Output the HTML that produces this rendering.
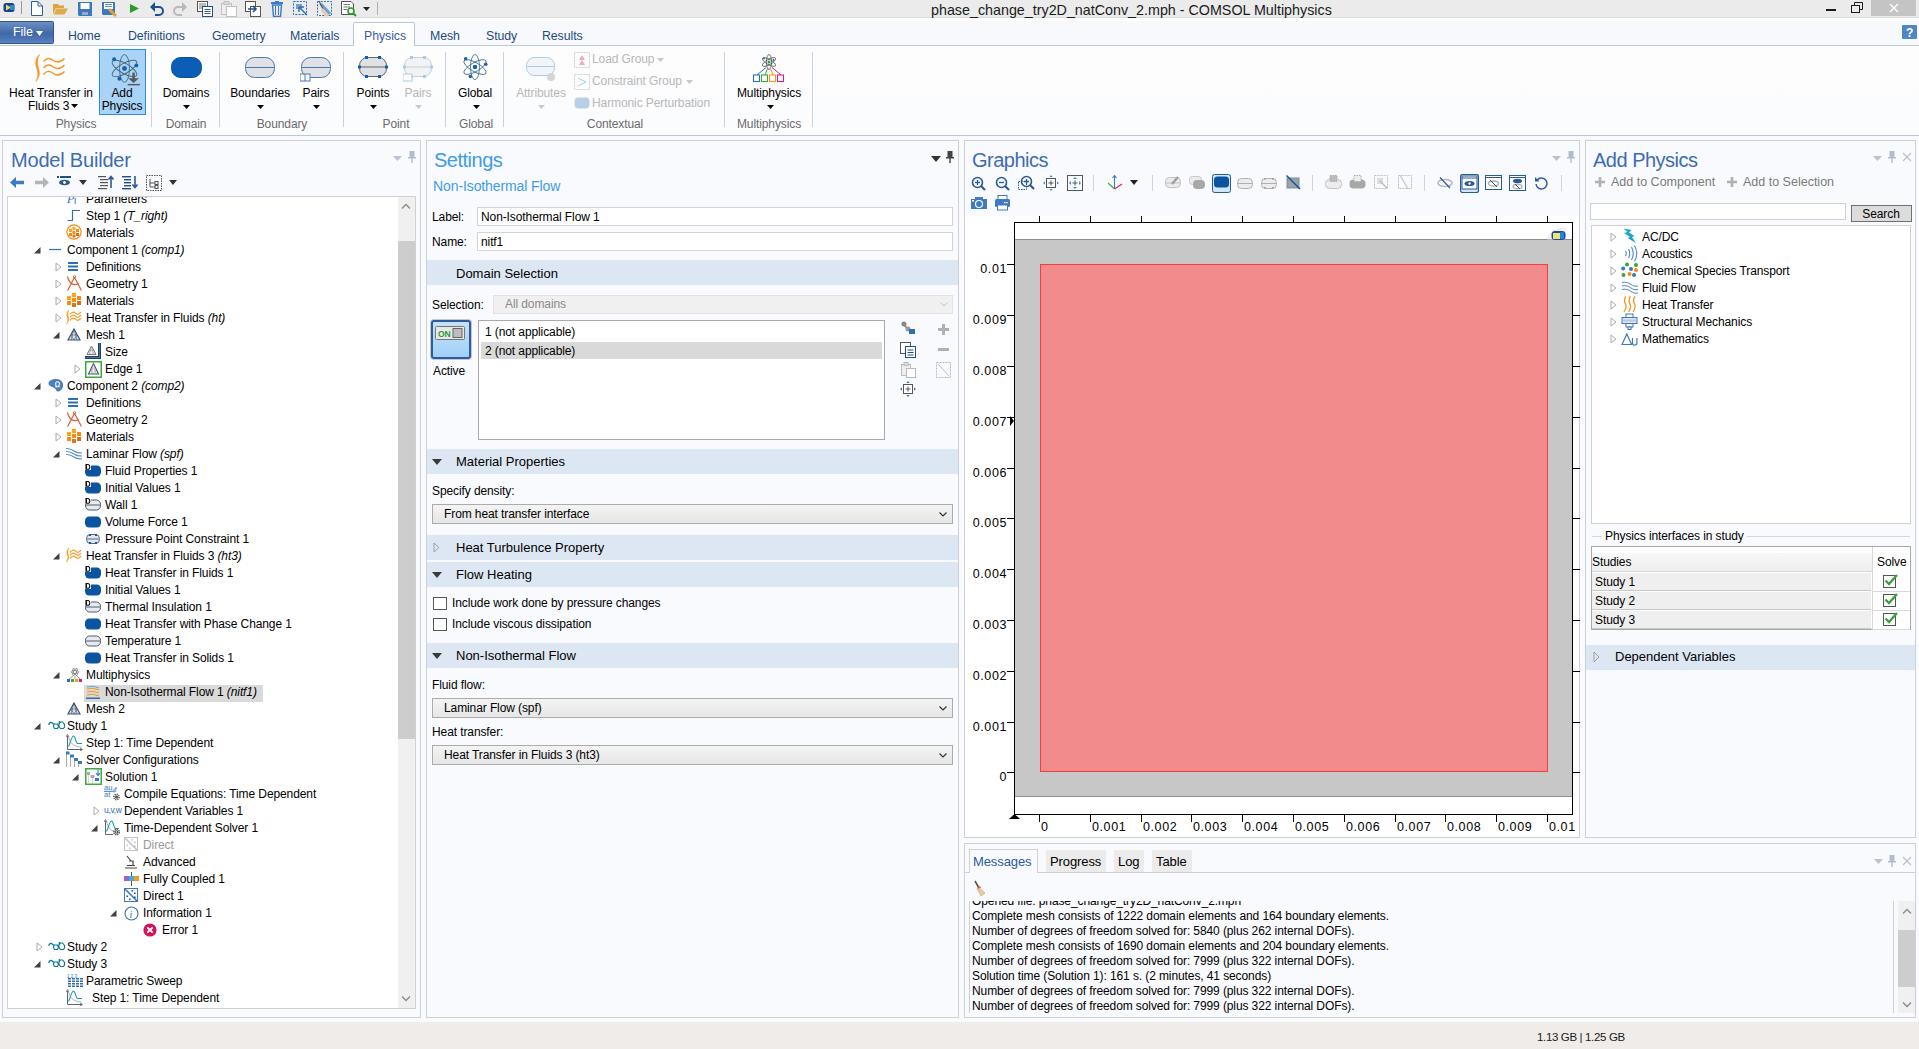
<!DOCTYPE html>
<html><head><meta charset="utf-8"><title>COMSOL Multiphysics</title>
<style>
html,body{margin:0;padding:0;}
body{width:1919px;height:1049px;position:relative;overflow:hidden;background:#f9fafd;font-family:"Liberation Sans",sans-serif;}
body div, body svg{position:absolute;box-sizing:border-box;}
.t{white-space:nowrap;letter-spacing:-0.1px;}
i{font-style:italic;}
</style></head><body>
<div style="left:0px;top:0px;width:1919px;height:18px;background:#ebebeb;"></div>
<div style="left:0px;top:17px;width:1919px;height:1px;background:#dcdcdc;"></div>
<div style="left:0px;top:18px;width:1919px;height:3px;background:#fdfdfe;"></div>
<div class="t" style="left:931px;top:3px;font-size:14.3px;line-height:14.3px;color:#1a1a1a;letter-spacing:0;">phase_change_try2D_natConv_2.mph - COMSOL Multiphysics</div>
<div style="left:1826px;top:9px;width:10px;height:2px;background:#1a1a1a;"></div>
<svg style="left:1851px;top:2px" width="12" height="11" viewBox="0 0 12 11"><rect x="0.5" y="3.5" width="8" height="7" fill="none" stroke="#1a1a1a"/><path d="M3.5 3.5 V0.5 H11.5 V7.5 H8.5" fill="none" stroke="#1a1a1a"/></svg>
<div style="left:1871px;top:0px;width:45px;height:16px;background:#c4c4c4;"></div>
<svg style="left:1889px;top:3px" width="10" height="10" viewBox="0 0 10 10"><path d="M1 1 L9 9 M9 1 L1 9" stroke="#fff" stroke-width="1.4"/></svg>
<div style="left:0px;top:21px;width:1919px;height:24px;background:#f8f9fd;"></div>
<div style="left:0px;top:45px;width:1919px;height:1px;background:#bccbdc;"></div>
<div style="left:0px;top:46px;width:1919px;height:89px;background:linear-gradient(#fdfdfe,#fbfcfd);"></div>
<div style="left:0px;top:135px;width:1919px;height:1px;background:#b9c9db;"></div>
<div style="left:0px;top:21px;width:54px;height:23px;background:linear-gradient(#6e8fc3,#3f68a8 55%,#5b80bb);border:1px solid #2d5896;border-left:none;border-radius:0 2px 2px 0;"></div>
<div class="t" style="left:13px;top:26px;font-size:12.5px;line-height:12.5px;color:#fff;">File</div>
<svg style="left:36px;top:31px" width="7" height="5" viewBox="0 0 7 5"><path d="M0 0 H7 L3.5 5 Z" fill="#fff"/></svg>
<div style="left:353px;top:22px;width:62px;height:24px;background:#fff;border:1px solid #b7c8dc;border-bottom:none;border-radius:2px 2px 0 0;"></div>
<div class="t" style="left:68px;top:30px;font-size:12.3px;line-height:12.3px;color:#1e4a80;letter-spacing:-0.05px;">Home</div>
<div class="t" style="left:128px;top:30px;font-size:12.3px;line-height:12.3px;color:#1e4a80;letter-spacing:-0.05px;">Definitions</div>
<div class="t" style="left:212px;top:30px;font-size:12.3px;line-height:12.3px;color:#1e4a80;letter-spacing:-0.05px;">Geometry</div>
<div class="t" style="left:290px;top:30px;font-size:12.3px;line-height:12.3px;color:#1e4a80;letter-spacing:-0.05px;">Materials</div>
<div class="t" style="left:364px;top:30px;font-size:12.3px;line-height:12.3px;color:#3a5aa8;letter-spacing:-0.05px;">Physics</div>
<div class="t" style="left:430px;top:30px;font-size:12.3px;line-height:12.3px;color:#1e4a80;letter-spacing:-0.05px;">Mesh</div>
<div class="t" style="left:486px;top:30px;font-size:12.3px;line-height:12.3px;color:#1e4a80;letter-spacing:-0.05px;">Study</div>
<div class="t" style="left:542px;top:30px;font-size:12.3px;line-height:12.3px;color:#1e4a80;letter-spacing:-0.05px;">Results</div>
<div style="left:1902px;top:25px;width:15px;height:14px;background:#4f86c6;border-radius:1px;"></div>
<div class="t" style="left:1906px;top:27px;font-size:12px;line-height:12px;color:#fff;font-weight:bold;">?</div>
<svg style="left:34px;top:54px" width="32" height="28" viewBox="0 0 32 28"><path d="M5.5 0.5 C1 5 1 10 3 15 C4.5 19 4 23 2 27.5 C5.5 23 6 19 4.6 15 C3.2 10 3 5 5.5 0.5 Z" fill="#f7931e" stroke="#f7931e" stroke-width="0.6"/><path d="M9.5 7.5 C12.5 3.5 15.5 3.5 19.5 6.5 C23.5 9.5 26.5 8.5 30.5 4.5" fill="none" stroke="#f7931e" stroke-width="1.3"/><path d="M9.5 14 C12.5 10 15.5 10 19.5 13 C23.5 16 26.5 15 30.5 11" fill="none" stroke="#f7931e" stroke-width="1.3"/><path d="M9.5 20.5 C12.5 16.5 15.5 16.5 19.5 19.5 C23.5 22.5 26.5 21.5 30.5 17.5" fill="none" stroke="#f7931e" stroke-width="1.3"/></svg>
<div class="t" style="left:-49.0px;top:87px;width:200px;text-align:center;font-size:12px;line-height:12px;color:#000;">Heat Transfer in</div>
<div class="t" style="left:28px;top:100px;font-size:12px;line-height:12px;color:#000;">Fluids 3</div>
<svg style="left:71px;top:104px" width="7" height="4" viewBox="0 0 7 4"><path d="M0 0 H7 L3.5 4 Z" fill="#000"/></svg>
<div style="left:99px;top:49px;width:47px;height:66px;background:#a9d3f7;border:1px solid #2e8be8;"></div>
<svg style="left:109px;top:53px" width="31" height="33" viewBox="0 0 30 32"><g transform="translate(15 15)" fill="none" stroke="#4a6a7a" stroke-width="0.9"><ellipse rx="13.5" ry="4.8" transform="rotate(90)"/><ellipse rx="13.5" ry="4.8" transform="rotate(30)"/><ellipse rx="13.5" ry="4.8" transform="rotate(150)"/></g><circle cx="15" cy="15" r="2.4" fill="#1560b0"/><circle cx="5" cy="6" r="1.9" fill="#1560b0"/><circle cx="26.5" cy="12" r="1.9" fill="#1560b0"/><circle cx="10" cy="25" r="1.9" fill="#1560b0"/><rect x="22.6" y="19" width="2.4" height="7" fill="#5a5a5a"/><path d="M18.5 24.5 H29 L23.8 29 Z" fill="#5a5a5a"/><rect x="18" y="30" width="12" height="1.4" fill="#5a5a5a"/></svg>
<div class="t" style="left:22.0px;top:87px;width:200px;text-align:center;font-size:12px;line-height:12px;color:#000;">Add</div>
<div class="t" style="left:22.0px;top:100px;width:200px;text-align:center;font-size:12px;line-height:12px;color:#000;">Physics</div>
<div class="t" style="left:-24.0px;top:118px;width:200px;text-align:center;font-size:12px;line-height:12px;color:#6b6b6b;">Physics</div>
<div style="left:151px;top:52px;width:1px;height:75px;background:#c5d3e2;"></div>
<svg style="left:171px;top:57px" width="31" height="21" viewBox="0 0 31 21"><rect x="0.5" y="0.5" width="30" height="20" rx="9" fill="#0b5eb5" stroke="#0a4f97"/></svg>
<div class="t" style="left:86.0px;top:87px;width:200px;text-align:center;font-size:12px;line-height:12px;color:#000;">Domains</div>
<svg style="left:183px;top:105px" width="7" height="4" viewBox="0 0 7 4"><path d="M0 0 H7 L3.5 4 Z" fill="#000"/></svg>
<div class="t" style="left:86.0px;top:118px;width:200px;text-align:center;font-size:12px;line-height:12px;color:#6b6b6b;">Domain</div>
<div style="left:219px;top:52px;width:1px;height:75px;background:#c5d3e2;"></div>
<svg style="left:245px;top:57px" width="30" height="21" viewBox="0 0 30 21"><rect x="0.5" y="0.5" width="29" height="20" rx="9" fill="#dfe1e4" stroke="#4a78b0"/><line x1="1" y1="10.5" x2="29" y2="10.5" stroke="#4a78b0"/></svg>
<div class="t" style="left:160.0px;top:87px;width:200px;text-align:center;font-size:12px;line-height:12px;color:#000;">Boundaries</div>
<svg style="left:257px;top:105px" width="7" height="4" viewBox="0 0 7 4"><path d="M0 0 H7 L3.5 4 Z" fill="#000"/></svg>
<svg style="left:300px;top:57px" width="32" height="25" viewBox="0 0 32 25"><rect x="1.5" y="0.5" width="29" height="20" rx="9" fill="#dfe1e4" stroke="#4a78b0"/><line x1="2" y1="10.5" x2="30" y2="10.5" stroke="#4a78b0"/><rect x="0" y="17" width="10" height="7" fill="#fff" stroke="#4a78b0"/><line x1="5" y1="17" x2="5" y2="24" stroke="#4a78b0"/></svg>
<div class="t" style="left:216.0px;top:87px;width:200px;text-align:center;font-size:12px;line-height:12px;color:#000;">Pairs</div>
<svg style="left:313px;top:105px" width="7" height="4" viewBox="0 0 7 4"><path d="M0 0 H7 L3.5 4 Z" fill="#000"/></svg>
<div class="t" style="left:182.0px;top:118px;width:200px;text-align:center;font-size:12px;line-height:12px;color:#6b6b6b;">Boundary</div>
<div style="left:343px;top:52px;width:1px;height:75px;background:#c5d3e2;"></div>
<svg style="left:358px;top:56px" width="30" height="22" viewBox="0 0 30 22"><rect x="1.5" y="1.5" width="27" height="19" rx="8" fill="#dfe1e4" stroke="#666"/><line x1="2" y1="11" x2="28" y2="11" stroke="#666"/><rect x="7" y="0" width="3" height="3" fill="#0b5eb5"/><rect x="20" y="0" width="3" height="3" fill="#0b5eb5"/><rect x="7" y="19" width="3" height="3" fill="#0b5eb5"/><rect x="20" y="19" width="3" height="3" fill="#0b5eb5"/><rect x="0" y="9.5" width="3" height="3" fill="#0b5eb5"/><rect x="27" y="9.5" width="3" height="3" fill="#0b5eb5"/></svg>
<div class="t" style="left:273.0px;top:87px;width:200px;text-align:center;font-size:12px;line-height:12px;color:#000;">Points</div>
<svg style="left:370px;top:105px" width="7" height="4" viewBox="0 0 7 4"><path d="M0 0 H7 L3.5 4 Z" fill="#000"/></svg>
<svg style="left:403px;top:56px" width="30" height="26" viewBox="0 0 30 26"><rect x="1.5" y="1.5" width="27" height="19" rx="8" fill="#f2f3f4" stroke="#ccc"/><line x1="2" y1="11" x2="28" y2="11" stroke="#ccc"/><rect x="7" y="0" width="3" height="3" fill="#a9cbe9"/><rect x="20" y="0" width="3" height="3" fill="#a9cbe9"/><rect x="7" y="19" width="3" height="3" fill="#a9cbe9"/><rect x="20" y="19" width="3" height="3" fill="#a9cbe9"/><rect x="0" y="9.5" width="3" height="3" fill="#a9cbe9"/><rect x="27" y="9.5" width="3" height="3" fill="#a9cbe9"/><rect x="0" y="18" width="9" height="7" fill="#fff" stroke="#a9cbe9"/></svg>
<div class="t" style="left:318.0px;top:87px;width:200px;text-align:center;font-size:12px;line-height:12px;color:#b8b8b8;">Pairs</div>
<svg style="left:415px;top:105px" width="7" height="4" viewBox="0 0 7 4"><path d="M0 0 H7 L3.5 4 Z" fill="#c8c8c8"/></svg>
<div class="t" style="left:296.0px;top:118px;width:200px;text-align:center;font-size:12px;line-height:12px;color:#6b6b6b;">Point</div>
<div style="left:445px;top:52px;width:1px;height:75px;background:#c5d3e2;"></div>
<svg style="left:461px;top:53px" width="28" height="30" viewBox="0 0 30 32"><g transform="translate(15 15)" fill="none" stroke="#3f6f86" stroke-width="0.9"><ellipse rx="13.5" ry="4.8" transform="rotate(90)"/><ellipse rx="13.5" ry="4.8" transform="rotate(30)"/><ellipse rx="13.5" ry="4.8" transform="rotate(150)"/></g><circle cx="15" cy="15" r="2.4" fill="#1a5fb4"/><circle cx="5" cy="6" r="1.9" fill="#1a5fb4"/><circle cx="26.5" cy="12" r="1.9" fill="#1a5fb4"/><circle cx="10" cy="25" r="1.9" fill="#1a5fb4"/></svg>
<div class="t" style="left:375.0px;top:87px;width:200px;text-align:center;font-size:12px;line-height:12px;color:#000;">Global</div>
<svg style="left:473px;top:105px" width="7" height="4" viewBox="0 0 7 4"><path d="M0 0 H7 L3.5 4 Z" fill="#000"/></svg>
<div class="t" style="left:376.0px;top:118px;width:200px;text-align:center;font-size:12px;line-height:12px;color:#6b6b6b;">Global</div>
<div style="left:503px;top:52px;width:1px;height:75px;background:#c5d3e2;"></div>
<svg style="left:526px;top:57px" width="30" height="26" viewBox="0 0 30 26"><rect x="0.5" y="0.5" width="28" height="18" rx="8" fill="#f3f4f6" stroke="#a9cbe9"/><line x1="1" y1="9.5" x2="28" y2="9.5" stroke="#a9cbe9"/><circle cx="25" cy="20" r="4" fill="#d4d4d4"/></svg>
<div class="t" style="left:441.0px;top:87px;width:200px;text-align:center;font-size:12px;line-height:12px;color:#b8b8b8;">Attributes</div>
<svg style="left:538px;top:105px" width="7" height="4" viewBox="0 0 7 4"><path d="M0 0 H7 L3.5 4 Z" fill="#c8c8c8"/></svg>
<svg style="left:574px;top:52px" width="16" height="16" viewBox="0 0 16 16"><rect x="0.5" y="0.5" width="15" height="15" fill="none" stroke="#cfcfcf" stroke-dasharray="2 1"/><path d="M8 3 L5 8 H11 Z M8 8 L5 13 H11 Z" fill="#f0a8c8"/></svg>
<div class="t" style="left:592px;top:53px;font-size:12px;line-height:12px;color:#b8b8b8;">Load Group</div>
<svg style="left:657px;top:58px" width="7" height="4" viewBox="0 0 7 4"><path d="M0 0 H7 L3.5 4 Z" fill="#c8c8c8"/></svg>
<svg style="left:574px;top:74px" width="16" height="16" viewBox="0 0 16 16"><rect x="0.5" y="0.5" width="15" height="15" fill="none" stroke="#cfcfcf" stroke-dasharray="2 1"/><path d="M4 4 L12 8 L4 12" fill="none" stroke="#a9cbe9"/></svg>
<div class="t" style="left:592px;top:75px;font-size:12px;line-height:12px;color:#b8b8b8;">Constraint Group</div>
<svg style="left:686px;top:80px" width="7" height="4" viewBox="0 0 7 4"><path d="M0 0 H7 L3.5 4 Z" fill="#c8c8c8"/></svg>
<svg style="left:574px;top:97px" width="16" height="12" viewBox="0 0 16 12"><rect x="0.5" y="0.5" width="15" height="11" rx="4" fill="#b7d0e6"/></svg>
<div class="t" style="left:592px;top:97px;font-size:12px;line-height:12px;color:#b8b8b8;">Harmonic Perturbation</div>
<div class="t" style="left:515.0px;top:118px;width:200px;text-align:center;font-size:12px;line-height:12px;color:#6b6b6b;">Contextual</div>
<div style="left:724px;top:52px;width:1px;height:75px;background:#c5d3e2;"></div>
<svg style="left:752px;top:54px" width="34" height="29" viewBox="0 0 34 29"><g transform="translate(17 8)" fill="none" stroke="#555" stroke-width="0.8"><ellipse rx="7.5" ry="2.6" transform="rotate(90)"/><ellipse rx="7.5" ry="2.6" transform="rotate(30)"/><ellipse rx="7.5" ry="2.6" transform="rotate(150)"/></g><circle cx="17" cy="8" r="1.5" fill="#2a9d3a"/><circle cx="12" cy="4.5" r="1" fill="#2a6fc9"/><circle cx="21.5" cy="6" r="1" fill="#2a6fc9"/><path d="M14 13.5 L5 21" stroke="#2a6fc9" fill="none"/><path d="M15.5 14.5 L13 21" stroke="#3aaa3a" fill="none"/><path d="M18.5 14.5 L21 21" stroke="#f39a1e" fill="none"/><path d="M20 13.5 L29 21" stroke="#d0208a" fill="none"/><rect x="1.5" y="21" width="6" height="6.5" fill="#fff" stroke="#2a6fc9" stroke-width="1.1"/><rect x="9.5" y="21" width="6" height="6.5" fill="#fff" stroke="#3aaa3a" stroke-width="1.1"/><rect x="17.5" y="21" width="6" height="6.5" fill="#fff" stroke="#f39a1e" stroke-width="1.1"/><rect x="25.5" y="21" width="6" height="6.5" fill="#fff" stroke="#d0208a" stroke-width="1.1"/></svg>
<div class="t" style="left:669.0px;top:87px;width:200px;text-align:center;font-size:12px;line-height:12px;color:#000;">Multiphysics</div>
<svg style="left:767px;top:105px" width="7" height="4" viewBox="0 0 7 4"><path d="M0 0 H7 L3.5 4 Z" fill="#000"/></svg>
<div class="t" style="left:669.0px;top:118px;width:200px;text-align:center;font-size:12px;line-height:12px;color:#6b6b6b;">Multiphysics</div>
<div style="left:812px;top:52px;width:1px;height:75px;background:#c5d3e2;"></div>
<div style="left:2px;top:140px;width:419px;height:878px;background:#f9fafd;border:1px solid #cdd0d5;"></div>
<div style="left:426px;top:140px;width:533px;height:878px;background:#f9fafd;border:1px solid #cdd0d5;"></div>
<div style="left:964px;top:140px;width:616px;height:698px;background:#f9fafd;border:1px solid #cdd0d5;"></div>
<div style="left:1585px;top:140px;width:331px;height:698px;background:#f9fafd;border:1px solid #cdd0d5;"></div>
<div style="left:964px;top:843px;width:952px;height:175px;background:#f9fafd;border:1px solid #cdd0d5;"></div>
<div style="left:0px;top:1022px;width:1919px;height:27px;background:#f0ecea;"></div>
<div class="t" style="left:1537px;top:1032px;font-size:11.5px;line-height:11.5px;color:#1a1a1a;letter-spacing:-0.35px;">1.13 GB | 1.25 GB</div>
<svg style="left:3px;top:2px" width="12" height="11" viewBox="0 0 12 11"><rect x="0.5" y="1" width="11" height="9" rx="2.5" fill="#1a3f9a"/><path d="M3 2.5 L8 5.5 L3 8.5 Z" fill="#f0e040"/><rect x="7" y="3" width="4" height="5" fill="#2aa0e0" opacity="0.8"/></svg>
<div style="left:21px;top:1px;width:1px;height:13px;background:#9a9a9a;"></div>
<svg style="left:31px;top:1px" width="12" height="15" viewBox="0 0 12 15"><path d="M0.5 0.5 H7 L11.5 5 V14.5 H0.5 Z" fill="#fff" stroke="#2f5f98"/><path d="M7 0.5 V5 H11.5" fill="none" stroke="#2f5f98"/></svg>
<svg style="left:53px;top:3px" width="16" height="12" viewBox="0 0 16 12"><path d="M0 1 H5 L6 2.5 H11 V5 H3 L0 11 Z" fill="#d9a441"/><path d="M3.5 5.5 H15 L11.5 11.5 H0.5 Z" fill="#e0aa48"/></svg>
<svg style="left:78px;top:2px" width="14" height="14" viewBox="0 0 14 14"><path d="M0 0 H14 V14 H1 L0 13 Z" fill="#3f77b8"/><rect x="2.5" y="1" width="9" height="6" fill="#fff"/><rect x="4" y="10" width="6" height="3" fill="#fff" opacity="0.4"/></svg>
<svg style="left:102px;top:2px" width="15" height="15" viewBox="0 0 15 15"><path d="M0 0 H13 V13 H1 L0 12 Z" fill="#3f77b8"/><rect x="2" y="1" width="9" height="6" fill="#fff"/><path d="M3 2.5 H10 M3 4.5 H10" stroke="#3f77b8" stroke-width="0.8"/><path d="M7 7 L14 14" stroke="#d9a441" stroke-width="3"/></svg>
<svg style="left:129px;top:3px" width="11" height="11" viewBox="0 0 11 11"><path d="M1 1 L10 5.5 L1 10 Z" fill="#2a9a2a"/></svg>
<svg style="left:150px;top:2px" width="14" height="14" viewBox="0 0 14 14"><path d="M4 5 H9 A4 4 0 0 1 9 13 H5" fill="none" stroke="#1f4f8f" stroke-width="2"/><path d="M0 5 L5 0 V10 Z" fill="#1f4f8f"/></svg>
<svg style="left:173px;top:2px" width="14" height="14" viewBox="0 0 14 14"><path d="M10 5 H5 A4 4 0 0 0 5 13 H9" fill="none" stroke="#b8b8b8" stroke-width="2"/><path d="M14 5 L9 0 V10 Z" fill="#b8b8b8"/></svg>
<svg style="left:197px;top:1px" width="16" height="16" viewBox="0 0 16 16"><rect x="0.5" y="0.5" width="10" height="10" fill="#fff" stroke="#555"/><path d="M2 3 H9 M2 5 H9 M2 7 H7" stroke="#555" stroke-width="0.8"/><rect x="5.5" y="5.5" width="10" height="10" fill="#fff" stroke="#1f4f8f"/><path d="M7.5 8.5 H13.5 M7.5 10.5 H13.5 M7.5 12.5 H13.5" stroke="#1f4f8f" stroke-width="0.9"/></svg>
<svg style="left:221px;top:1px" width="16" height="16" viewBox="0 0 16 16"><rect x="0.5" y="2.5" width="10" height="11" fill="#eee" stroke="#c0c0c0"/><rect x="3" y="0.5" width="5" height="3" fill="#ddd" stroke="#c0c0c0"/><rect x="5.5" y="5.5" width="10" height="10" fill="#fff" stroke="#c0c0c0"/></svg>
<svg style="left:245px;top:1px" width="16" height="16" viewBox="0 0 16 16"><rect x="0.5" y="0.5" width="10" height="10" fill="#fff" stroke="#555"/><rect x="5.5" y="5.5" width="10" height="10" fill="#fff" stroke="#555"/><path d="M3 8 H11 M8 5 L11 8 L8 11" stroke="#1f4f8f" stroke-width="1.6" fill="none"/></svg>
<svg style="left:271px;top:1px" width="12" height="16" viewBox="0 0 12 16"><rect x="0" y="1" width="12" height="2" fill="#3a7ac8"/><rect x="4" y="0" width="4" height="1.5" fill="#3a7ac8"/><path d="M1.5 4 H10.5 L9.5 15.5 H2.5 Z" fill="none" stroke="#3a7ac8" stroke-width="1.4"/><path d="M4.5 5 V14 M7.5 5 V14" stroke="#3a7ac8"/></svg>
<svg style="left:293px;top:1px" width="16" height="16" viewBox="0 0 16 16"><rect x="0.5" y="0.5" width="13" height="13" fill="none" stroke="#2f6db5" stroke-dasharray="2 1.2"/><rect x="3" y="3" width="6" height="5" fill="#6fa0d8"/><path d="M6 6 L14 14 M6 6 V11 M6 6 H11" stroke="#2f6db5" stroke-width="1.4"/></svg>
<svg style="left:317px;top:1px" width="16" height="16" viewBox="0 0 16 16"><rect x="0.5" y="0.5" width="14" height="14" fill="none" stroke="#2f6db5" stroke-dasharray="2 1.2"/><path d="M4 3 L13 13" stroke="#6fa0d8" stroke-width="3"/><path d="M2 0 L6 8" stroke="#555" stroke-width="1.2"/><path d="M5 7 L12 14 L9 16 L4 10 Z" fill="#e8cca8"/></svg>
<svg style="left:341px;top:1px" width="16" height="16" viewBox="0 0 16 16"><path d="M0.5 0.5 H10 L12.5 3 V13.5 H0.5 Z" fill="#fff" stroke="#555"/><path d="M2.5 3.5 H9 M2.5 6 H9 M2.5 8.5 H6" stroke="#555" stroke-width="0.8"/><circle cx="10" cy="10" r="3" fill="#fff" stroke="#2a9a2a" stroke-width="1.6"/><path d="M12 12 L15 15" stroke="#2a9a2a" stroke-width="2"/></svg>
<svg style="left:363px;top:7px" width="7" height="4" viewBox="0 0 7 4"><path d="M0 0 H7 L3.5 4 Z" fill="#222"/></svg>
<div style="left:377px;top:2px;width:1px;height:13px;background:#b0b0b0;"></div>
<div class="t" style="left:11px;top:150px;font-size:20px;line-height:20px;color:#3e6cb2;letter-spacing:-0.2px;">Model Builder</div>
<svg style="left:393px;top:156px" width="9" height="5" viewBox="0 0 9 5"><path d="M0 0 H9 L4.5 5 Z" fill="#b9c2d0"/></svg>
<svg style="left:408px;top:151px" width="8" height="12" viewBox="0 0 8 12"><rect x="1.5" y="0" width="5" height="6" fill="#b4bccb"/><rect x="0" y="6" width="8" height="1.5" fill="#b4bccb"/><rect x="3.3" y="7" width="1.4" height="5" fill="#b4bccb"/></svg>
<svg style="left:10px;top:177px" width="15" height="11" viewBox="0 0 15 11"><path d="M0 5.5 L6 0 V3.8 H14 V7.2 H6 V11 Z" fill="#3f7bbf"/></svg>
<svg style="left:34px;top:177px" width="15" height="11" viewBox="0 0 15 11"><path d="M15 5.5 L9 0 V3.8 H1 V7.2 H9 V11 Z" fill="#b5b5b5"/></svg>
<svg style="left:57px;top:176px" width="15" height="11" viewBox="0 0 15 11"><rect x="0" y="0" width="2" height="2" fill="#1f4f8f"/><rect x="3" y="0" width="11" height="2" fill="#1f4f8f"/><ellipse cx="7.5" cy="6.5" rx="5.5" ry="2.8" fill="#2b5a92"/><circle cx="7.5" cy="6.5" r="1.4" fill="#fff"/></svg>
<svg style="left:79px;top:180px" width="8" height="5" viewBox="0 0 8 5"><path d="M0 0 H8 L4 5 Z" fill="#333"/></svg>
<svg style="left:98px;top:175px" width="17" height="15" viewBox="0 0 17 15"><g fill="#555"><rect x="0" y="1" width="8" height="1.2"/><rect x="2" y="4" width="8" height="1.2"/><rect x="2" y="7" width="8" height="1.2"/><rect x="2" y="10" width="8" height="1.2"/><rect x="0" y="13" width="9" height="1.2"/></g><path d="M13 2 V13 M10.5 4.5 L13 1.5 L15.5 4.5" stroke="#2b5a92" stroke-width="1.6" fill="none"/></svg>
<svg style="left:122px;top:175px" width="17" height="15" viewBox="0 0 17 15"><g fill="#1f4f8f"><rect x="0" y="1" width="9" height="1.4"/><rect x="2" y="4" width="7" height="1.4"/><rect x="2" y="7" width="7" height="1.4"/><rect x="2" y="10" width="7" height="1.4"/><rect x="0" y="13" width="9" height="1.4"/></g><path d="M13 1 V12 M10.5 9.5 L13 12.5 L15.5 9.5" stroke="#2b5a92" stroke-width="1.6" fill="none"/></svg>
<svg style="left:146px;top:175px" width="17" height="17" viewBox="0 0 17 17"><rect x="0.5" y="0.5" width="15" height="15" fill="none" stroke="#555" stroke-dasharray="1.5 1"/><path d="M4 4 V12 H9 M4 8 H9" stroke="#555" fill="none"/><rect x="9" y="6.5" width="3" height="3" fill="none" stroke="#555"/><rect x="9" y="10.5" width="3" height="3" fill="none" stroke="#555"/></svg>
<svg style="left:169px;top:180px" width="8" height="5" viewBox="0 0 8 5"><path d="M0 0 H8 L4 5 Z" fill="#333"/></svg>
<div style="left:7px;top:196px;width:409px;height:813px;background:#fff;border:1px solid #d0d0d0;"></div>
<div style="left:398px;top:197px;width:17px;height:811px;background:#f0f0f0;"></div>
<div style="left:398px;top:241px;width:17px;height:498px;background:#cdcdcd;"></div>
<svg style="left:401px;top:203px" width="10" height="6" viewBox="0 0 10 6"><path d="M1 5.5 L5 1.5 L9 5.5" stroke="#8a8a8a" stroke-width="1.3" fill="none"/></svg>
<svg style="left:401px;top:996px" width="10" height="6" viewBox="0 0 10 6"><path d="M1 0.5 L5 4.5 L9 0.5" stroke="#8a8a8a" stroke-width="1.3" fill="none"/></svg>
<div style="left:8px;top:197px;width:390px;height:811px;overflow:hidden;">
<svg style="left:59px;top:-5px" width="14" height="14" viewBox="0 0 14 14"><text x="0" y="11" font-family="Liberation Serif" font-style="italic" font-size="12" fill="#2f6db5">P</text><text x="7" y="12" font-size="10" fill="#2f6db5" font-family="Liberation Sans">i</text></svg>
<div class="t" style="left:78px;top:-4px;font-size:12px;line-height:12px;color:#000;">Parameters</div>
<svg style="left:59px;top:12px" width="14" height="13" viewBox="0 0 14 13"><path d="M0.5 11.5 H5.5 V1.5 H13" fill="none" stroke="#2f6db5" stroke-width="1.2"/></svg>
<div class="t" style="left:78px;top:13px;font-size:12px;line-height:12px;color:#000;">Step 1 <i>(T_right)</i></div>
<svg style="left:58px;top:27px" width="16" height="16" viewBox="0 0 16 16"><circle cx="8" cy="8" r="7.1" fill="#fff" stroke="#f58a1a" stroke-width="1.2"/><rect x="6.5" y="3" width="3" height="3" fill="#ffa514"/><rect x="3" y="5" width="3" height="3" fill="#ffa31a"/><rect x="6.5" y="7" width="3" height="3" fill="#f98c10"/><rect x="10" y="5" width="3" height="3" fill="#f58a1a"/><rect x="3" y="9" width="3" height="3" fill="#fb8c12"/><rect x="6.5" y="10.5" width="3" height="3" fill="#d97a1a"/><rect x="10" y="9" width="3" height="3" fill="#d4731a"/></svg>
<div class="t" style="left:78px;top:30px;font-size:12px;line-height:12px;color:#000;">Materials</div>
<svg style="left:26px;top:50px" width="7" height="7" viewBox="0 0 7 7"><path d="M6.5 0 V6.5 H0 Z" fill="#404040"/></svg>
<svg style="left:40px;top:46px" width="14" height="13" viewBox="0 0 14 13"><line x1="1" y1="6.5" x2="13" y2="6.5" stroke="#2f6db5" stroke-width="1.2"/></svg>
<div class="t" style="left:59px;top:47px;font-size:12px;line-height:12px;color:#000;">Component 1 <i>(comp1)</i></div>
<svg style="left:47px;top:65px" width="7" height="10" viewBox="0 0 7 10"><path d="M1 1 L6 5 L1 9 Z" fill="#fff" stroke="#aaa" stroke-width="1"/></svg>
<svg style="left:59px;top:63px" width="12" height="12" viewBox="0 0 12 12"><rect x="1" y="2" width="10" height="2" fill="#2f6db5"/><rect x="1" y="5.5" width="10" height="2" fill="#2f6db5"/><rect x="1" y="9" width="10" height="2" fill="#2f6db5"/></svg>
<div class="t" style="left:78px;top:64px;font-size:12px;line-height:12px;color:#000;">Definitions</div>
<svg style="left:47px;top:82px" width="7" height="10" viewBox="0 0 7 10"><path d="M1 1 L6 5 L1 9 Z" fill="#fff" stroke="#aaa" stroke-width="1"/></svg>
<svg style="left:58px;top:78px" width="17" height="17" viewBox="0 0 17 17"><path d="M8.5 2.2 L1.6 15.5 M8.5 2.2 L15.4 15.5 M1.4 1.5 C2.5 6 5 9.2 8.5 9.6 C10 9.7 11.5 9.4 12.8 8.6" fill="none" stroke="#dd5a35" stroke-width="1.15"/><circle cx="8.5" cy="1.8" r="1.2" fill="none" stroke="#dd5a35" stroke-width="0.9"/></svg>
<div class="t" style="left:78px;top:81px;font-size:12px;line-height:12px;color:#000;">Geometry 1</div>
<svg style="left:47px;top:99px" width="7" height="10" viewBox="0 0 7 10"><path d="M1 1 L6 5 L1 9 Z" fill="#fff" stroke="#aaa" stroke-width="1"/></svg>
<svg style="left:59px;top:96px" width="14" height="15" viewBox="0 0 14 15"><rect x="5" y="0" width="4" height="4" fill="#ffa514"/><rect x="0" y="3" width="4" height="4" fill="#ffa31a"/><rect x="5" y="5" width="4" height="4" fill="#f98c10"/><rect x="10" y="3" width="4" height="4" fill="#f58a1a"/><rect x="0" y="8" width="4" height="4" fill="#fb8c12"/><rect x="5" y="10" width="4" height="4" fill="#d97a1a"/><rect x="10" y="8" width="4" height="4" fill="#d4731a"/></svg>
<div class="t" style="left:78px;top:98px;font-size:12px;line-height:12px;color:#000;">Materials</div>
<svg style="left:47px;top:116px" width="7" height="10" viewBox="0 0 7 10"><path d="M1 1 L6 5 L1 9 Z" fill="#fff" stroke="#aaa" stroke-width="1"/></svg>
<svg style="left:58px;top:113px" width="17" height="15" viewBox="0 0 17 15"><path d="M2.6 0 C0.6 3 0.4 5 1.4 7 C2.2 9 2 11 0.6 14 C3 11 3.2 9 2.4 7 C1.6 5 1.8 3 2.6 0 Z" fill="#f39a1e" stroke="#f39a1e" stroke-width="0.5"/><path d="M4 4.4 C6 1.7000000000000002 8 1.7000000000000002 9.5 3.2 C11 4.800000000000001 13 4.800000000000001 15 2.2" fill="none" stroke="#f39a1e" stroke-width="1.2"/><path d="M4 7.4 C6 4.7 8 4.7 9.5 6.2 C11 7.800000000000001 13 7.800000000000001 15 5.2" fill="none" stroke="#f39a1e" stroke-width="1.2"/><path d="M4 10.399999999999999 C6 7.699999999999999 8 7.699999999999999 9.5 9.2 C11 10.799999999999999 13 10.799999999999999 15 8.2" fill="none" stroke="#f39a1e" stroke-width="1.2"/></svg>
<div class="t" style="left:78px;top:115px;font-size:12px;line-height:12px;color:#000;">Heat Transfer in Fluids <i>(ht)</i></div>
<svg style="left:45px;top:135px" width="7" height="7" viewBox="0 0 7 7"><path d="M6.5 0 V6.5 H0 Z" fill="#404040"/></svg>
<svg style="left:59px;top:131px" width="14" height="13" viewBox="0 0 14 13"><path d="M7 1 L13 12 L1 12 Z" fill="#dfe3ea" stroke="#3d5470" stroke-width="1.2"/><path d="M4 7 L10 7 M7 1 L4 12 M7 1 L10 12 M4 7 L7 12 L10 7" fill="none" stroke="#3d5470" stroke-width="0.6"/></svg>
<div class="t" style="left:78px;top:132px;font-size:12px;line-height:12px;color:#000;">Mesh 1</div>
<svg style="left:77px;top:146px" width="17" height="17" viewBox="0 0 17 17"><path d="M6.5 3 L11 11.5 H2 Z" fill="#e8e8e8" stroke="#777" stroke-width="1"/><path d="M4.3 7.5 H8.7 M6.5 3 L4.3 11.5 M6.5 3 L8.7 11.5" stroke="#999" stroke-width="0.6"/><rect x="0" y="13" width="16" height="3" fill="#1f3f66"/><rect x="13" y="0" width="3" height="16" fill="#1f3f66"/><path d="M0.5 14.5 H15 M14.5 0.5 V15" stroke="#6fa3e0" stroke-width="1" stroke-dasharray="1 1"/></svg>
<div class="t" style="left:97px;top:149px;font-size:12px;line-height:12px;color:#000;">Size</div>
<svg style="left:66px;top:167px" width="7" height="10" viewBox="0 0 7 10"><path d="M1 1 L6 5 L1 9 Z" fill="#fff" stroke="#aaa" stroke-width="1"/></svg>
<svg style="left:77px;top:164px" width="17" height="17" viewBox="0 0 17 17"><rect x="0.75" y="0.75" width="15.5" height="15.5" fill="#fff" stroke="#3aaa3a" stroke-width="1.5"/><path d="M8.5 2.5 L13.5 13 H3.5 Z" fill="#f2f2f2" stroke="#3d5470" stroke-width="1.1"/><path d="M6 8 H11 M8.5 2.5 L6 13 M8.5 2.5 L11 13 M6 8 L8.5 13 L11 8" stroke="#999" stroke-width="0.5" fill="none"/></svg>
<div class="t" style="left:97px;top:166px;font-size:12px;line-height:12px;color:#000;">Edge 1</div>
<svg style="left:26px;top:186px" width="7" height="7" viewBox="0 0 7 7"><path d="M6.5 0 V6.5 H0 Z" fill="#404040"/></svg>
<svg style="left:40px;top:181px" width="17" height="15" viewBox="0 0 17 15"><path d="M0.6 4.5 C1.5 1.5 7 0.3 10.5 1.2 C14 2.2 15.6 5.5 15 8.5 C14.3 11.5 12 13.8 9.5 13.5 C8 13.3 8 11 6.5 10 C3.5 8.8 0 7.5 0.6 4.5 Z" fill="#4a80bb"/><path d="M7.3 8.8 H9 C7.8 8 7.6 6.8 7.6 5.8 A1.9 2 0 0 1 11.4 5.8 C11.4 6.8 11.2 8 10 8.8 H11.7" fill="none" stroke="#fff" stroke-width="1.1"/></svg>
<div class="t" style="left:59px;top:183px;font-size:12px;line-height:12px;color:#000;">Component 2 <i>(comp2)</i></div>
<svg style="left:47px;top:201px" width="7" height="10" viewBox="0 0 7 10"><path d="M1 1 L6 5 L1 9 Z" fill="#fff" stroke="#aaa" stroke-width="1"/></svg>
<svg style="left:59px;top:199px" width="12" height="12" viewBox="0 0 12 12"><rect x="1" y="2" width="10" height="2" fill="#2f6db5"/><rect x="1" y="5.5" width="10" height="2" fill="#2f6db5"/><rect x="1" y="9" width="10" height="2" fill="#2f6db5"/></svg>
<div class="t" style="left:78px;top:200px;font-size:12px;line-height:12px;color:#000;">Definitions</div>
<svg style="left:47px;top:218px" width="7" height="10" viewBox="0 0 7 10"><path d="M1 1 L6 5 L1 9 Z" fill="#fff" stroke="#aaa" stroke-width="1"/></svg>
<svg style="left:58px;top:214px" width="17" height="17" viewBox="0 0 17 17"><path d="M8.5 2.2 L1.6 15.5 M8.5 2.2 L15.4 15.5 M1.4 1.5 C2.5 6 5 9.2 8.5 9.6 C10 9.7 11.5 9.4 12.8 8.6" fill="none" stroke="#dd5a35" stroke-width="1.15"/><circle cx="8.5" cy="1.8" r="1.2" fill="none" stroke="#dd5a35" stroke-width="0.9"/></svg>
<div class="t" style="left:78px;top:217px;font-size:12px;line-height:12px;color:#000;">Geometry 2</div>
<svg style="left:47px;top:235px" width="7" height="10" viewBox="0 0 7 10"><path d="M1 1 L6 5 L1 9 Z" fill="#fff" stroke="#aaa" stroke-width="1"/></svg>
<svg style="left:59px;top:232px" width="14" height="15" viewBox="0 0 14 15"><rect x="5" y="0" width="4" height="4" fill="#ffa514"/><rect x="0" y="3" width="4" height="4" fill="#ffa31a"/><rect x="5" y="5" width="4" height="4" fill="#f98c10"/><rect x="10" y="3" width="4" height="4" fill="#f58a1a"/><rect x="0" y="8" width="4" height="4" fill="#fb8c12"/><rect x="5" y="10" width="4" height="4" fill="#d97a1a"/><rect x="10" y="8" width="4" height="4" fill="#d4731a"/></svg>
<div class="t" style="left:78px;top:234px;font-size:12px;line-height:12px;color:#000;">Materials</div>
<svg style="left:45px;top:254px" width="7" height="7" viewBox="0 0 7 7"><path d="M6.5 0 V6.5 H0 Z" fill="#404040"/></svg>
<svg style="left:58px;top:250px" width="17" height="14" viewBox="0 0 17 14"><path d="M0 1.5 C4 1.0 6 2.5 9 4.5 C11 6.0 13 6.0 16 6.0" fill="none" stroke="#5b8fcc" stroke-width="1.1"/><path d="M0 4.5 C4 4.0 6 5.5 9 7.5 C11 9.0 13 9.0 16 9.0" fill="none" stroke="#5b8fcc" stroke-width="1.1"/><path d="M0 7.5 C4 7.0 6 8.5 9 10.5 C11 12.0 13 12.0 16 12.0" fill="none" stroke="#5b8fcc" stroke-width="1.1"/></svg>
<div class="t" style="left:78px;top:251px;font-size:12px;line-height:12px;color:#000;">Laminar Flow <i>(spf)</i></div>
<svg style="left:77px;top:267px" width="17" height="13" viewBox="0 0 17 13"><rect x="0" y="1.5" width="16" height="11" rx="4.2" fill="#0b55a0"/><rect x="-1" y="-1" width="7" height="7" fill="#fff"/><path d="M1 0.5 h1.8 a2 2.4 0 0 1 0 4.8 h-1.8 z M1.5 0.5 v4.8" fill="none" stroke="#111" stroke-width="1.1"/></svg>
<div class="t" style="left:97px;top:268px;font-size:12px;line-height:12px;color:#000;">Fluid Properties 1</div>
<svg style="left:77px;top:284px" width="17" height="13" viewBox="0 0 17 13"><rect x="0" y="1.5" width="16" height="11" rx="4.2" fill="#0b55a0"/><rect x="-1" y="-1" width="7" height="7" fill="#fff"/><path d="M1 0.5 h1.8 a2 2.4 0 0 1 0 4.8 h-1.8 z M1.5 0.5 v4.8" fill="none" stroke="#111" stroke-width="1.1"/></svg>
<div class="t" style="left:97px;top:285px;font-size:12px;line-height:12px;color:#000;">Initial Values 1</div>
<svg style="left:77px;top:301px" width="17" height="13" viewBox="0 0 17 13"><rect x="0.5" y="2" width="15" height="10" rx="4.2" fill="#e8eaed" stroke="#4d5d72"/><line x1="1" y1="7" x2="15" y2="7" stroke="#4d5d72"/><rect x="-1" y="-1" width="7" height="7" fill="#fff"/><path d="M1 0.5 h1.8 a2 2.4 0 0 1 0 4.8 h-1.8 z M1.5 0.5 v4.8" fill="none" stroke="#111" stroke-width="1.1"/></svg>
<div class="t" style="left:97px;top:302px;font-size:12px;line-height:12px;color:#000;">Wall 1</div>
<svg style="left:77px;top:318px" width="17" height="13" viewBox="0 0 17 13"><rect x="0" y="1.5" width="16" height="11" rx="4.2" fill="#0b55a0"/></svg>
<div class="t" style="left:97px;top:319px;font-size:12px;line-height:12px;color:#000;">Volume Force 1</div>
<svg style="left:78px;top:335px" width="14" height="13" viewBox="0 0 14 13"><rect x="0.5" y="2.5" width="13" height="9" rx="4" fill="#e4e6ea" stroke="#5a6a80"/><line x1="1" y1="7" x2="13" y2="7" stroke="#5a6a80"/><g fill="#0b5cad"><rect x="3" y="2" width="2" height="2"/><rect x="9" y="2" width="2" height="2"/><rect x="3" y="10" width="2" height="2"/><rect x="9" y="10" width="2" height="2"/></g></svg>
<div class="t" style="left:97px;top:336px;font-size:12px;line-height:12px;color:#000;">Pressure Point Constraint 1</div>
<svg style="left:45px;top:356px" width="7" height="7" viewBox="0 0 7 7"><path d="M6.5 0 V6.5 H0 Z" fill="#404040"/></svg>
<svg style="left:58px;top:351px" width="17" height="15" viewBox="0 0 17 15"><path d="M2.6 0 C0.6 3 0.4 5 1.4 7 C2.2 9 2 11 0.6 14 C3 11 3.2 9 2.4 7 C1.6 5 1.8 3 2.6 0 Z" fill="#f39a1e" stroke="#f39a1e" stroke-width="0.5"/><path d="M4 4.4 C6 1.7000000000000002 8 1.7000000000000002 9.5 3.2 C11 4.800000000000001 13 4.800000000000001 15 2.2" fill="none" stroke="#f39a1e" stroke-width="1.2"/><path d="M4 7.4 C6 4.7 8 4.7 9.5 6.2 C11 7.800000000000001 13 7.800000000000001 15 5.2" fill="none" stroke="#f39a1e" stroke-width="1.2"/><path d="M4 10.399999999999999 C6 7.699999999999999 8 7.699999999999999 9.5 9.2 C11 10.799999999999999 13 10.799999999999999 15 8.2" fill="none" stroke="#f39a1e" stroke-width="1.2"/></svg>
<div class="t" style="left:78px;top:353px;font-size:12px;line-height:12px;color:#000;">Heat Transfer in Fluids 3 <i>(ht3)</i></div>
<svg style="left:77px;top:369px" width="17" height="13" viewBox="0 0 17 13"><rect x="0" y="1.5" width="16" height="11" rx="4.2" fill="#0b55a0"/><rect x="-1" y="-1" width="7" height="7" fill="#fff"/><path d="M1 0.5 h1.8 a2 2.4 0 0 1 0 4.8 h-1.8 z M1.5 0.5 v4.8" fill="none" stroke="#111" stroke-width="1.1"/></svg>
<div class="t" style="left:97px;top:370px;font-size:12px;line-height:12px;color:#000;">Heat Transfer in Fluids 1</div>
<svg style="left:77px;top:386px" width="17" height="13" viewBox="0 0 17 13"><rect x="0" y="1.5" width="16" height="11" rx="4.2" fill="#0b55a0"/><rect x="-1" y="-1" width="7" height="7" fill="#fff"/><path d="M1 0.5 h1.8 a2 2.4 0 0 1 0 4.8 h-1.8 z M1.5 0.5 v4.8" fill="none" stroke="#111" stroke-width="1.1"/></svg>
<div class="t" style="left:97px;top:387px;font-size:12px;line-height:12px;color:#000;">Initial Values 1</div>
<svg style="left:77px;top:403px" width="17" height="13" viewBox="0 0 17 13"><rect x="0.5" y="2" width="15" height="10" rx="4.2" fill="#e8eaed" stroke="#4d5d72"/><line x1="1" y1="7" x2="15" y2="7" stroke="#4d5d72"/><rect x="-1" y="-1" width="7" height="7" fill="#fff"/><path d="M1 0.5 h1.8 a2 2.4 0 0 1 0 4.8 h-1.8 z M1.5 0.5 v4.8" fill="none" stroke="#111" stroke-width="1.1"/></svg>
<div class="t" style="left:97px;top:404px;font-size:12px;line-height:12px;color:#000;">Thermal Insulation 1</div>
<svg style="left:77px;top:420px" width="17" height="13" viewBox="0 0 17 13"><rect x="0" y="1.5" width="16" height="11" rx="4.2" fill="#0b55a0"/></svg>
<div class="t" style="left:97px;top:421px;font-size:12px;line-height:12px;color:#000;">Heat Transfer with Phase Change 1</div>
<svg style="left:77px;top:437px" width="17" height="13" viewBox="0 0 17 13"><rect x="0.5" y="2" width="15" height="10" rx="4.2" fill="#e8eaed" stroke="#4d5d72"/><line x1="1" y1="7" x2="15" y2="7" stroke="#4d5d72"/></svg>
<div class="t" style="left:97px;top:438px;font-size:12px;line-height:12px;color:#000;">Temperature 1</div>
<svg style="left:77px;top:454px" width="17" height="13" viewBox="0 0 17 13"><rect x="0" y="1.5" width="16" height="11" rx="4.2" fill="#0b55a0"/></svg>
<div class="t" style="left:97px;top:455px;font-size:12px;line-height:12px;color:#000;">Heat Transfer in Solids 1</div>
<svg style="left:45px;top:475px" width="7" height="7" viewBox="0 0 7 7"><path d="M6.5 0 V6.5 H0 Z" fill="#404040"/></svg>
<svg style="left:59px;top:471px" width="15" height="15" viewBox="0 0 15 15"><g transform="translate(8 4)" fill="none" stroke="#666" stroke-width="0.6"><ellipse rx="4" ry="1.5"/><ellipse rx="4" ry="1.5" transform="rotate(60)"/><ellipse rx="4" ry="1.5" transform="rotate(120)"/></g><path d="M6 8 L2 11 M8 8 V11 M10 8 L13 11" stroke="#888" stroke-width="0.8"/><rect x="0" y="11" width="3" height="3" fill="#2a6fc9"/><rect x="4" y="11" width="3" height="3" fill="#3aaa3a"/><rect x="8" y="11" width="3" height="3" fill="#f39a1e"/><rect x="12" y="11" width="3" height="3" fill="#d0208a"/></svg>
<div class="t" style="left:78px;top:472px;font-size:12px;line-height:12px;color:#000;">Multiphysics</div>
<div style="left:76px;top:488px;width:179px;height:17px;background:#d9d9d9;"></div>
<svg style="left:78px;top:488px" width="14" height="14" viewBox="0 0 14 14"><path d="M1 4 Q7 2 13 5 M1 7 Q7 5 13 8 M1 10 Q7 8 13 11" fill="none" stroke="#f39a1e" stroke-width="1"/><path d="M1 2 Q7 0 13 3" fill="none" stroke="#6aa0d8" stroke-width="1"/><rect x="0" y="12.5" width="14" height="1.5" fill="#2f6db5"/></svg>
<div class="t" style="left:97px;top:489px;font-size:12px;line-height:12px;color:#000;">Non-Isothermal Flow 1 <i>(nitf1)</i></div>
<svg style="left:59px;top:505px" width="14" height="13" viewBox="0 0 14 13"><path d="M7 1 L13 12 L1 12 Z" fill="#dfe3ea" stroke="#3d5470" stroke-width="1.2"/><path d="M4 7 L10 7 M7 1 L4 12 M7 1 L10 12 M4 7 L7 12 L10 7" fill="none" stroke="#3d5470" stroke-width="0.6"/></svg>
<div class="t" style="left:78px;top:506px;font-size:12px;line-height:12px;color:#000;">Mesh 2</div>
<svg style="left:26px;top:526px" width="7" height="7" viewBox="0 0 7 7"><path d="M6.5 0 V6.5 H0 Z" fill="#404040"/></svg>
<svg style="left:40px;top:522px" width="18" height="11" viewBox="0 0 18 11"><path d="M0.8 6 C1.2 3.5 2.8 2.8 4 3.8 L5.8 5.4" fill="none" stroke="#117a96" stroke-width="1.3"/><path d="M6 5 H9.5 L10.5 7.5 L9.5 9.5 H6.5 L5.5 7.5 Z" fill="none" stroke="#117a96" stroke-width="1.2"/><path d="M11 5 L12.5 3 H14.5 L16.5 5.5 V8 L15.5 9.5 H12.5 L11 7.5 Z M10.5 7.5 L11.5 2" fill="none" stroke="#117a96" stroke-width="1.2"/></svg>
<div class="t" style="left:59px;top:523px;font-size:12px;line-height:12px;color:#000;">Study 1</div>
<svg style="left:58px;top:537px" width="18" height="17" viewBox="0 0 18 17"><path d="M1.5 2 V15.5 H16" fill="none" stroke="#666" stroke-width="1"/><path d="M0 3 L1.5 0.5 L3 3 M14 14 L16.5 15.5 L14 17" fill="none" stroke="#666" stroke-width="0.9"/><path d="M2.5 2.5 C4 9 7 12.5 15.5 13" fill="none" stroke="#a8a8a8" stroke-width="0.9"/><path d="M2.5 12.5 C4.5 9 5.5 2 7.5 2 C9.5 2 9.5 9 11.5 9.5 H16" fill="none" stroke="#1a9ab8" stroke-width="1.1"/></svg>
<div class="t" style="left:78px;top:540px;font-size:12px;line-height:12px;color:#000;">Step 1: Time Dependent</div>
<svg style="left:45px;top:560px" width="7" height="7" viewBox="0 0 7 7"><path d="M6.5 0 V6.5 H0 Z" fill="#404040"/></svg>
<svg style="left:58px;top:554px" width="17" height="17" viewBox="0 0 17 17"><path d="M0.5 1 V16 M4.5 4 V16 M8.5 7 V16 M12.5 10 V16" stroke="#a0a0a0" stroke-width="0.9"/><g fill="#3a78c0"><rect x="0" y="0.5" width="3.5" height="3"/><rect x="4" y="3.5" width="4" height="3"/><rect x="8" y="7" width="4" height="3"/><rect x="12" y="10" width="4" height="3"/></g></svg>
<div class="t" style="left:78px;top:557px;font-size:12px;line-height:12px;color:#000;">Solver Configurations</div>
<svg style="left:64px;top:577px" width="7" height="7" viewBox="0 0 7 7"><path d="M6.5 0 V6.5 H0 Z" fill="#404040"/></svg>
<svg style="left:77px;top:571px" width="17" height="17" viewBox="0 0 17 17"><rect x="0.75" y="0.75" width="15.5" height="15.5" fill="#fff" stroke="#3aaa3a" stroke-width="1.5"/><g fill="#a8a8a8"><rect x="2" y="4" width="3" height="3"/><rect x="5.5" y="7" width="4" height="3"/></g><path d="M3.5 7 V15 M7.5 10 V15" stroke="#c8c8c8" stroke-width="0.8"/><rect x="10" y="10" width="4" height="3" fill="#3a78c0"/><path d="M13 1.5 V7 M11 5 L13 7.5 L15 5" fill="none" stroke="#3a78c0" stroke-width="1.1"/></svg>
<div class="t" style="left:97px;top:574px;font-size:12px;line-height:12px;color:#000;">Solution 1</div>
<svg style="left:96px;top:587px" width="18" height="18" viewBox="0 0 18 18"><text x="0" y="6" font-size="7.5" fill="#3a78c0" font-family="Liberation Sans">au</text><rect x="0" y="6.8" width="9" height="1" fill="#3a78c0"/><text x="0" y="13" font-size="7.5" fill="#3a78c0" font-family="Liberation Sans">at</text><text x="10.5" y="8" font-size="8" fill="#3a78c0" font-family="Liberation Sans">f</text><rect x="9" y="5.5" width="2" height="0.9" fill="#3a78c0"/><rect x="9" y="7.3" width="2" height="0.9" fill="#3a78c0"/><circle cx="12.5" cy="13" r="2.6" fill="none" stroke="#555" stroke-width="1.6" stroke-dasharray="1.2 0.8"/><circle cx="12.5" cy="13" r="1.6" fill="#555"/></svg>
<div class="t" style="left:116px;top:591px;font-size:12px;line-height:12px;color:#000;">Compile Equations: Time Dependent</div>
<svg style="left:85px;top:609px" width="7" height="10" viewBox="0 0 7 10"><path d="M1 1 L6 5 L1 9 Z" fill="#fff" stroke="#aaa" stroke-width="1"/></svg>
<svg style="left:96px;top:607px" width="19" height="12" viewBox="0 0 19 12"><text x="0" y="9" font-size="8.5" fill="#2f6db5" font-family="Liberation Sans" letter-spacing="-0.3">u,v,w</text></svg>
<div class="t" style="left:116px;top:608px;font-size:12px;line-height:12px;color:#000;">Dependent Variables 1</div>
<svg style="left:83px;top:628px" width="7" height="7" viewBox="0 0 7 7"><path d="M6.5 0 V6.5 H0 Z" fill="#404040"/></svg>
<svg style="left:96px;top:622px" width="18" height="17" viewBox="0 0 18 17"><path d="M1.5 2 V15.5 H9" fill="none" stroke="#666" stroke-width="1"/><path d="M0 3 L1.5 0.5 L3 3" fill="none" stroke="#666" stroke-width="0.9"/><path d="M2.5 2.5 C4 8 6 11 9 12" fill="none" stroke="#a8a8a8" stroke-width="0.9"/><path d="M2.5 12.5 C4.5 9 5.5 2 7.5 2 C9.5 2 9.5 9 11.5 9.5 H15" fill="none" stroke="#1a9ab8" stroke-width="1.1"/><circle cx="12.5" cy="13" r="2.7" fill="none" stroke="#555" stroke-width="1.7" stroke-dasharray="1.3 0.8"/><circle cx="12.5" cy="13" r="1.7" fill="#555"/><circle cx="12.5" cy="13" r="0.7" fill="#fff"/></svg>
<div class="t" style="left:116px;top:625px;font-size:12px;line-height:12px;color:#000;">Time-Dependent Solver 1</div>
<svg style="left:116px;top:640px" width="14" height="14" viewBox="0 0 14 14"><rect x="0.5" y="0.5" width="13" height="13" fill="#fff" stroke="#c4c4c4"/><path d="M1 1 L13 13" stroke="#c4c4c4" stroke-width="1.6"/><g fill="#c4c4c4"><rect x="7.5" y="2" width="1.6" height="1.6"/><rect x="10" y="4.5" width="1.6" height="1.6"/><rect x="2.5" y="7.5" width="1.6" height="1.6"/><rect x="5" y="10.5" width="1.6" height="1.6"/><rect x="10" y="8.5" width="1.6" height="1.6"/></g></svg>
<div class="t" style="left:135px;top:642px;font-size:12px;line-height:12px;color:#9a9a9a;">Direct</div>
<svg style="left:116px;top:658px" width="14" height="14" viewBox="0 0 14 14"><path d="M3 1 L7 6 M5 6 H9 V10 M1 13 H13 M3 10.5 H11" stroke="#444" stroke-width="1.2" fill="none"/></svg>
<div class="t" style="left:135px;top:659px;font-size:12px;line-height:12px;color:#000;">Advanced</div>
<svg style="left:116px;top:675px" width="16" height="14" viewBox="0 0 16 14"><rect x="0" y="4" width="5" height="5" fill="#a060c8"/><rect x="5" y="4" width="5" height="5" fill="#42a8e0"/><rect x="10" y="4" width="5" height="5" fill="#f39a1e"/><path d="M7.5 0 V4 M7.5 9 V14" stroke="#555" stroke-width="1"/></svg>
<div class="t" style="left:135px;top:676px;font-size:12px;line-height:12px;color:#000;">Fully Coupled 1</div>
<svg style="left:116px;top:691px" width="14" height="14" viewBox="0 0 14 14"><rect x="0.5" y="0.5" width="13" height="13" fill="#fff" stroke="#3a78c0"/><path d="M1 1 L13 13" stroke="#3a78c0" stroke-width="1.6"/><g fill="#1f4f8f"><rect x="7.5" y="2" width="1.6" height="1.6"/><rect x="10" y="4.5" width="1.6" height="1.6"/><rect x="2.5" y="7.5" width="1.6" height="1.6"/><rect x="5" y="10.5" width="1.6" height="1.6"/><rect x="10" y="8.5" width="1.6" height="1.6"/></g></svg>
<div class="t" style="left:135px;top:693px;font-size:12px;line-height:12px;color:#000;">Direct 1</div>
<svg style="left:102px;top:713px" width="7" height="7" viewBox="0 0 7 7"><path d="M6.5 0 V6.5 H0 Z" fill="#404040"/></svg>
<svg style="left:116px;top:709px" width="15" height="15" viewBox="0 0 15 15"><circle cx="7.5" cy="7.5" r="6.5" fill="#fff" stroke="#3d6fb0" stroke-width="1.1"/><text x="5.6" y="11.5" font-family="Liberation Serif" font-style="italic" font-size="10" fill="#3d6fb0">i</text></svg>
<div class="t" style="left:135px;top:710px;font-size:12px;line-height:12px;color:#000;">Information 1</div>
<svg style="left:135px;top:726px" width="14" height="14" viewBox="0 0 14 14"><circle cx="7" cy="7" r="6.6" fill="#d4145a"/><path d="M4.3 4.3 L9.7 9.7 M9.7 4.3 L4.3 9.7" stroke="#fff" stroke-width="1.8"/></svg>
<div class="t" style="left:154px;top:727px;font-size:12px;line-height:12px;color:#000;">Error 1</div>
<svg style="left:28px;top:745px" width="7" height="10" viewBox="0 0 7 10"><path d="M1 1 L6 5 L1 9 Z" fill="#fff" stroke="#aaa" stroke-width="1"/></svg>
<svg style="left:40px;top:743px" width="18" height="11" viewBox="0 0 18 11"><path d="M0.8 6 C1.2 3.5 2.8 2.8 4 3.8 L5.8 5.4" fill="none" stroke="#117a96" stroke-width="1.3"/><path d="M6 5 H9.5 L10.5 7.5 L9.5 9.5 H6.5 L5.5 7.5 Z" fill="none" stroke="#117a96" stroke-width="1.2"/><path d="M11 5 L12.5 3 H14.5 L16.5 5.5 V8 L15.5 9.5 H12.5 L11 7.5 Z M10.5 7.5 L11.5 2" fill="none" stroke="#117a96" stroke-width="1.2"/></svg>
<div class="t" style="left:59px;top:744px;font-size:12px;line-height:12px;color:#000;">Study 2</div>
<svg style="left:26px;top:764px" width="7" height="7" viewBox="0 0 7 7"><path d="M6.5 0 V6.5 H0 Z" fill="#404040"/></svg>
<svg style="left:40px;top:760px" width="18" height="11" viewBox="0 0 18 11"><path d="M0.8 6 C1.2 3.5 2.8 2.8 4 3.8 L5.8 5.4" fill="none" stroke="#117a96" stroke-width="1.3"/><path d="M6 5 H9.5 L10.5 7.5 L9.5 9.5 H6.5 L5.5 7.5 Z" fill="none" stroke="#117a96" stroke-width="1.2"/><path d="M11 5 L12.5 3 H14.5 L16.5 5.5 V8 L15.5 9.5 H12.5 L11 7.5 Z M10.5 7.5 L11.5 2" fill="none" stroke="#117a96" stroke-width="1.2"/></svg>
<div class="t" style="left:59px;top:761px;font-size:12px;line-height:12px;color:#000;">Study 3</div>
<svg style="left:59px;top:777px" width="16" height="15" viewBox="0 0 16 15"><g fill="#2f6db5"><rect x="1" y="4.0" width="3" height="1.5"/><rect x="1" y="6.5" width="3" height="1.5"/><rect x="1" y="9.0" width="3" height="1.5"/><rect x="1" y="11.5" width="3" height="1.5"/><rect x="5" y="4.0" width="3" height="1.5"/><rect x="5" y="6.5" width="3" height="1.5"/><rect x="5" y="9.0" width="3" height="1.5"/><rect x="5" y="11.5" width="3" height="1.5"/><rect x="9" y="4.0" width="3" height="1.5"/><rect x="9" y="6.5" width="3" height="1.5"/><rect x="9" y="9.0" width="3" height="1.5"/><rect x="9" y="11.5" width="3" height="1.5"/><rect x="13" y="4.0" width="3" height="1.5"/><rect x="13" y="6.5" width="3" height="1.5"/><rect x="13" y="9.0" width="3" height="1.5"/><rect x="13" y="11.5" width="3" height="1.5"/></g><text x="0" y="3.5" font-size="4.5" fill="#2f6db5" font-family="Liberation Sans">1 2 3</text></svg>
<div class="t" style="left:78px;top:778px;font-size:12px;line-height:12px;color:#000;">Parametric Sweep</div>
<svg style="left:58px;top:792px" width="18" height="17" viewBox="0 0 18 17"><path d="M1.5 2 V15.5 H16" fill="none" stroke="#666" stroke-width="1"/><path d="M0 3 L1.5 0.5 L3 3 M14 14 L16.5 15.5 L14 17" fill="none" stroke="#666" stroke-width="0.9"/><path d="M2.5 2.5 C4 9 7 12.5 15.5 13" fill="none" stroke="#a8a8a8" stroke-width="0.9"/><path d="M2.5 12.5 C4.5 9 5.5 2 7.5 2 C9.5 2 9.5 9 11.5 9.5 H16" fill="none" stroke="#1a9ab8" stroke-width="1.1"/></svg>
<div class="t" style="left:84px;top:795px;font-size:12px;line-height:12px;color:#000;">Step 1: Time Dependent</div>
</div>
<div class="t" style="left:434px;top:150px;font-size:20px;line-height:20px;color:#3d9ce9;letter-spacing:-0.5px;">Settings</div>
<div class="t" style="left:433px;top:179px;font-size:14px;line-height:14px;color:#3d9ce9;letter-spacing:-0.1px;">Non-Isothermal Flow</div>
<svg style="left:931px;top:156px" width="10" height="6" viewBox="0 0 10 6"><path d="M0 0 H10 L5.0 6 Z" fill="#333"/></svg>
<svg style="left:946px;top:151px" width="8" height="12" viewBox="0 0 8 12"><rect x="1.5" y="0" width="5" height="6" fill="#444"/><rect x="0" y="6" width="8" height="1.5" fill="#444"/><rect x="3.3" y="7" width="1.4" height="5" fill="#444"/></svg>
<div class="t" style="left:432px;top:211px;font-size:12px;line-height:12px;color:#000;">Label:</div>
<div style="left:477px;top:207px;width:476px;height:19px;background:#fff;border:1px solid #d4d4d4;"></div>
<div class="t" style="left:481px;top:211px;font-size:12px;line-height:12px;color:#000;">Non-Isothermal Flow 1</div>
<div class="t" style="left:432px;top:236px;font-size:12px;line-height:12px;color:#000;">Name:</div>
<div style="left:477px;top:232px;width:476px;height:19px;background:#fff;border:1px solid #d4d4d4;"></div>
<div class="t" style="left:481px;top:236px;font-size:12px;line-height:12px;color:#000;">nitf1</div>
<div style="left:427px;top:260px;width:531px;height:25px;background:#dde7f3;"></div>
<div class="t" style="left:456px;top:267px;font-size:13px;line-height:13px;color:#000;letter-spacing:0;">Domain Selection</div>
<div class="t" style="left:432px;top:299px;font-size:12px;line-height:12px;color:#000;">Selection:</div>
<div style="left:493px;top:295px;width:460px;height:19px;background:#f0f0f0;border:1px solid #e2e2e2;"></div>
<div class="t" style="left:505px;top:298px;font-size:12px;line-height:12px;color:#8a8a8a;">All domains</div>
<svg style="left:940px;top:302px" width="8" height="5" viewBox="0 0 8 5"><path d="M0.5 0.5 L4 4 L7.5 0.5" stroke="#c0c0c0" fill="none"/></svg>
<div style="left:431px;top:320px;width:40px;height:39px;background:linear-gradient(#c4e2fb,#a0d0f6);border:2px solid #2d5aa0;border-radius:3px;box-shadow:0 0 0 1px #c8c8c8;"></div>
<svg style="left:435px;top:326px" width="30" height="14" viewBox="0 0 30 14"><rect x="0.5" y="0.5" width="29" height="13" rx="1" fill="#e8e8e8" stroke="#777"/><text x="3" y="10.5" font-size="8.5" font-weight="bold" fill="#2a9a3a" font-family="Liberation Sans">ON</text><rect x="18" y="2.5" width="9" height="9" fill="#bdbdbd" stroke="#666"/></svg>
<div class="t" style="left:433px;top:365px;font-size:12px;line-height:12px;color:#000;">Active</div>
<div style="left:478px;top:320px;width:407px;height:120px;background:#fff;border:1px solid #aaaaaa;"></div>
<div class="t" style="left:485px;top:326px;font-size:12px;line-height:12px;color:#000;">1 (not applicable)</div>
<div style="left:481px;top:342px;width:401px;height:17px;background:#d9d9d9;"></div>
<div class="t" style="left:485px;top:345px;font-size:12px;line-height:12px;color:#000;">2 (not applicable)</div>
<svg style="left:900px;top:321px" width="16" height="14" viewBox="0 0 16 14"><path d="M2 2 L8 8" stroke="#999" stroke-width="2"/><circle cx="4" cy="3" r="2.5" fill="#888"/><circle cx="8" cy="8" r="2.5" fill="#999"/><rect x="9" y="8" width="6" height="5" fill="#2f6db5"/></svg>
<svg style="left:937px;top:323px" width="13" height="13" viewBox="0 0 13 13"><path d="M6.5 1 V12 M1 6.5 H12" stroke="#b0b0b0" stroke-width="3"/></svg>
<svg style="left:900px;top:342px" width="17" height="16" viewBox="0 0 17 16"><rect x="0.5" y="0.5" width="10" height="11" fill="#fff" stroke="#555"/><rect x="5.5" y="4.5" width="10" height="11" fill="#fff" stroke="#1f4f8f"/><path d="M7.5 8 H13.5 M7.5 10.5 H13.5 M7.5 13 H13.5" stroke="#1f4f8f"/></svg>
<svg style="left:938px;top:348px" width="11" height="3" viewBox="0 0 11 3"><rect x="0" y="0" width="11" height="3" fill="#b0b0b0"/></svg>
<svg style="left:901px;top:362px" width="15" height="16" viewBox="0 0 15 16"><rect x="0.5" y="2.5" width="9" height="11" fill="#eee" stroke="#bbb"/><rect x="3" y="0.5" width="4" height="3" fill="#ddd" stroke="#bbb"/><rect x="5.5" y="6.5" width="9" height="9" fill="#fff" stroke="#bbb"/></svg>
<svg style="left:936px;top:362px" width="15" height="16" viewBox="0 0 15 16"><rect x="0.5" y="0.5" width="14" height="15" fill="none" stroke="#bbb" stroke-dasharray="2 1"/><path d="M2 2 L13 14" stroke="#bbb"/></svg>
<svg style="left:900px;top:381px" width="16" height="17" viewBox="0 0 16 17"><rect x="3.5" y="3.5" width="9" height="9" fill="#fff" stroke="#555"/><path d="M8 5.5 V10.5 M5.5 8 H10.5" stroke="#555"/><path d="M8 0 L6.5 2 H9.5 Z M8 16 L6.5 14 H9.5 Z M0 8 L2 6.5 V9.5 Z M16 8 L14 6.5 V9.5 Z" fill="#2f6db5"/></svg>
<div style="left:427px;top:449px;width:531px;height:25px;background:#dde7f3;"></div>
<svg style="left:432px;top:459px" width="10" height="6" viewBox="0 0 10 6"><path d="M0 0 H10 L5 6 Z" fill="#3a3a3a"/></svg>
<div class="t" style="left:456px;top:455px;font-size:13px;line-height:13px;color:#000;letter-spacing:0;">Material Properties</div>
<div class="t" style="left:432px;top:485px;font-size:12px;line-height:12px;color:#000;">Specify density:</div>
<div style="left:432px;top:504px;width:521px;height:20px;background:linear-gradient(#f4f4f4,#e6e6e6);border:1px solid #ababab;"></div>
<div class="t" style="left:444px;top:508px;font-size:12px;line-height:12px;color:#000;">From heat transfer interface</div>
<svg style="left:939px;top:512px" width="8" height="5" viewBox="0 0 8 5"><path d="M0.5 0.5 L4 4 L7.5 0.5" stroke="#333" stroke-width="1.2" fill="none"/></svg>
<div style="left:427px;top:535px;width:531px;height:25px;background:#dde7f3;"></div>
<svg style="left:433px;top:542px" width="7" height="11" viewBox="0 0 7 11"><path d="M1 1 L6 5.5 L1 10 Z" fill="none" stroke="#a0a0a0"/></svg>
<div class="t" style="left:456px;top:541px;font-size:13px;line-height:13px;color:#000;letter-spacing:0;">Heat Turbulence Property</div>
<div style="left:427px;top:562px;width:531px;height:25px;background:#dde7f3;"></div>
<svg style="left:432px;top:572px" width="10" height="6" viewBox="0 0 10 6"><path d="M0 0 H10 L5 6 Z" fill="#3a3a3a"/></svg>
<div class="t" style="left:456px;top:568px;font-size:13px;line-height:13px;color:#000;letter-spacing:0;">Flow Heating</div>
<div style="left:433px;top:597px;width:14px;height:13px;background:#fff;border:1px solid #5a5a5a;"></div>
<div class="t" style="left:452px;top:597px;font-size:12px;line-height:12px;color:#000;">Include work done by pressure changes</div>
<div style="left:433px;top:618px;width:14px;height:13px;background:#fff;border:1px solid #5a5a5a;"></div>
<div class="t" style="left:452px;top:618px;font-size:12px;line-height:12px;color:#000;">Include viscous dissipation</div>
<div style="left:427px;top:643px;width:531px;height:25px;background:#dde7f3;"></div>
<svg style="left:432px;top:653px" width="10" height="6" viewBox="0 0 10 6"><path d="M0 0 H10 L5 6 Z" fill="#3a3a3a"/></svg>
<div class="t" style="left:456px;top:649px;font-size:13px;line-height:13px;color:#000;letter-spacing:0;">Non-Isothermal Flow</div>
<div class="t" style="left:432px;top:679px;font-size:12px;line-height:12px;color:#000;">Fluid flow:</div>
<div style="left:432px;top:698px;width:521px;height:20px;background:linear-gradient(#f4f4f4,#e6e6e6);border:1px solid #ababab;"></div>
<div class="t" style="left:444px;top:702px;font-size:12px;line-height:12px;color:#000;">Laminar Flow (spf)</div>
<svg style="left:939px;top:706px" width="8" height="5" viewBox="0 0 8 5"><path d="M0.5 0.5 L4 4 L7.5 0.5" stroke="#333" stroke-width="1.2" fill="none"/></svg>
<div class="t" style="left:432px;top:726px;font-size:12px;line-height:12px;color:#000;">Heat transfer:</div>
<div style="left:432px;top:745px;width:521px;height:20px;background:linear-gradient(#f4f4f4,#e6e6e6);border:1px solid #ababab;"></div>
<div class="t" style="left:444px;top:749px;font-size:12px;line-height:12px;color:#000;">Heat Transfer in Fluids 3 (ht3)</div>
<svg style="left:939px;top:753px" width="8" height="5" viewBox="0 0 8 5"><path d="M0.5 0.5 L4 4 L7.5 0.5" stroke="#333" stroke-width="1.2" fill="none"/></svg>
<div class="t" style="left:972px;top:150px;font-size:20px;line-height:20px;color:#3e6cb2;letter-spacing:-0.5px;">Graphics</div>
<svg style="left:1552px;top:156px" width="9" height="5" viewBox="0 0 9 5"><path d="M0 0 H9 L4.5 5 Z" fill="#b9c2d0"/></svg>
<svg style="left:1567px;top:151px" width="8" height="12" viewBox="0 0 8 12"><rect x="1.5" y="0" width="5" height="6" fill="#b4bccb"/><rect x="0" y="6" width="8" height="1.5" fill="#b4bccb"/><rect x="3.3" y="7" width="1.4" height="5" fill="#b4bccb"/></svg>
<svg style="left:971px;top:176px" width="15" height="15" viewBox="0 0 15 15"><circle cx="6.5" cy="6.5" r="5" fill="none" stroke="#2b5a92" stroke-width="1.6"/><path d="M10 10 L14 14" stroke="#2b5a92" stroke-width="2.2"/><path d="M4 6.5 H9" stroke="#2b5a92" stroke-width="1.3"/><path d="M6.5 4 V9" stroke="#2b5a92" stroke-width="1.3"/></svg>
<svg style="left:995px;top:176px" width="15" height="15" viewBox="0 0 15 15"><circle cx="6.5" cy="6.5" r="5" fill="none" stroke="#2b5a92" stroke-width="1.6"/><path d="M10 10 L14 14" stroke="#2b5a92" stroke-width="2.2"/><path d="M4 6.5 H9" stroke="#2b5a92" stroke-width="1.3"/></svg>
<svg style="left:1018px;top:175px" width="17" height="16" viewBox="0 0 17 16"><rect x="0.5" y="6.5" width="8" height="8" fill="none" stroke="#2b5a92" stroke-dasharray="1.5 1"/><circle cx="8.5" cy="6.5" r="5" fill="none" stroke="#2b5a92" stroke-width="1.6"/><path d="M12 10 L16 14" stroke="#2b5a92" stroke-width="2.2"/><path d="M6 6.5 H11 M8.5 4 V9" stroke="#2b5a92" stroke-width="1.3"/></svg>
<svg style="left:1043px;top:175px" width="16" height="16" viewBox="0 0 16 16"><rect x="3.5" y="3.5" width="9" height="9" fill="none" stroke="#555"/><path d="M8 5.5 V10.5 M5.5 8 H10.5" stroke="#555"/><path d="M8 0 L6.5 2 H9.5 Z M8 16 L6.5 14 H9.5 Z M0 8 L2 6.5 V9.5 Z M16 8 L14 6.5 V9.5 Z" fill="#3a8ad8"/></svg>
<svg style="left:1067px;top:175px" width="16" height="16" viewBox="0 0 16 16"><rect x="0.5" y="0.5" width="15" height="15" fill="none" stroke="#555"/><path d="M8 5.5 V10.5 M5.5 8 H10.5" stroke="#555"/><path d="M8 2 L6 4 H10 Z M8 14 L6 12 H10 Z M2 8 L4 6 V10 Z M14 8 L12 6 V10 Z" fill="#3a8ad8"/></svg>
<div style="left:1093px;top:175px;width:1px;height:16px;background:#d0d4dc;"></div>
<svg style="left:1106px;top:175px" width="17" height="15" viewBox="0 0 17 15"><path d="M8.5 14 V1 M6.5 3 L8.5 0.5 L10.5 3" stroke="#3a7ac8" stroke-width="1.1" fill="none"/><path d="M8.5 14 L2 8" stroke="#3aaa3a" stroke-width="1.1"/><path d="M8.5 14 L16 9" stroke="#e0205a" stroke-width="1.1"/></svg>
<svg style="left:1130px;top:180px" width="8" height="5" viewBox="0 0 8 5"><path d="M0 0 H8 L4 5 Z" fill="#222"/></svg>
<div style="left:1152px;top:175px;width:1px;height:16px;background:#d0d4dc;"></div>
<svg style="left:1165px;top:175px" width="16" height="13" viewBox="0 0 16 13"><rect x="0.5" y="2.5" width="15" height="10" rx="4" fill="#ececec" stroke="#c0c0c0"/><path d="M1 8 H15" stroke="#c0c0c0"/><path d="M7 9 L13 2" stroke="#a0a0a0" stroke-width="2.5"/></svg>
<svg style="left:1189px;top:176px" width="17" height="14" viewBox="0 0 17 14"><rect x="0.5" y="0.5" width="12" height="8" rx="3" fill="#ececec" stroke="#c8c8c8"/><rect x="4" y="4" width="12" height="9" rx="4" fill="#a8a8a8"/></svg>
<svg style="left:1212px;top:174px" width="19" height="19" viewBox="0 0 19 19"><rect x="0.5" y="0.5" width="18" height="18" rx="2" fill="#cfe6fb" stroke="#2b5a9a"/><rect x="2" y="2.5" width="15" height="11" rx="3.5" fill="#0b55a0"/></svg>
<svg style="left:1237px;top:176px" width="17" height="13" viewBox="0 0 17 13"><rect x="0.5" y="2.5" width="15" height="10" rx="4" fill="#ececec" stroke="#b0b0b0"/><path d="M1 7.5 H15" stroke="#b0b0b0"/></svg>
<svg style="left:1261px;top:176px" width="17" height="13" viewBox="0 0 17 13"><rect x="0.5" y="2.5" width="15" height="10" rx="4" fill="#ececec" stroke="#b0b0b0"/><path d="M1 7.5 H15" stroke="#b0b0b0"/><g fill="#999"><rect x="3" y="2" width="1.6" height="1.6"/><rect x="11" y="2" width="1.6" height="1.6"/><rect x="3" y="11" width="1.6" height="1.6"/><rect x="11" y="11" width="1.6" height="1.6"/></g></svg>
<svg style="left:1286px;top:175px" width="16" height="16" viewBox="0 0 16 16"><rect x="1" y="3" width="12" height="10" fill="#a0a0a0" stroke="#6f8fb5"/><path d="M0.5 0.5 L14 14" stroke="#0b55a0" stroke-width="1.4"/></svg>
<div style="left:1312px;top:175px;width:1px;height:16px;background:#d0d4dc;"></div>
<svg style="left:1325px;top:175px" width="17" height="14" viewBox="0 0 17 14"><rect x="0.5" y="4.5" width="16" height="9" rx="4" fill="#ececec" stroke="#c0c0c0"/><rect x="5" y="0.5" width="7" height="6" fill="#bbb" stroke="#aaa" stroke-dasharray="1.5 1"/></svg>
<svg style="left:1349px;top:175px" width="17" height="14" viewBox="0 0 17 14"><rect x="0.5" y="4.5" width="16" height="9" rx="4" fill="#a8a8a8"/><rect x="5" y="0.5" width="7" height="6" fill="#eee" stroke="#aaa" stroke-dasharray="1.5 1"/></svg>
<svg style="left:1374px;top:175px" width="15" height="15" viewBox="0 0 15 15"><rect x="0.5" y="0.5" width="13" height="13" fill="none" stroke="#c0c0c0" stroke-dasharray="2 1"/><rect x="3" y="3" width="6" height="6" fill="#ddd"/><path d="M6 6 L13 13" stroke="#bbb" stroke-width="1.4"/></svg>
<svg style="left:1398px;top:175px" width="15" height="15" viewBox="0 0 15 15"><rect x="0.5" y="0.5" width="13" height="13" fill="none" stroke="#c0c0c0" stroke-dasharray="2 1"/><path d="M2 0 L10 14" stroke="#c8c8c8" stroke-width="1.3"/></svg>
<div style="left:1424px;top:175px;width:1px;height:16px;background:#d0d4dc;"></div>
<svg style="left:1437px;top:177px" width="16" height="12" viewBox="0 0 16 12"><ellipse cx="8" cy="6" rx="7" ry="3.5" fill="none" stroke="#b8b8b8" stroke-width="1.6"/><path d="M3 0.5 L13 11" stroke="#2b5a92" stroke-width="1.2"/></svg>
<svg style="left:1460px;top:174px" width="19" height="19" viewBox="0 0 19 19"><rect x="0.5" y="0.5" width="18" height="18" rx="2" fill="#cfe6fb" stroke="#2b5a9a" stroke-width="1.2"/><rect x="2" y="2" width="15" height="13" fill="#fff" stroke="#2b5a92"/><path d="M2 4 H17" stroke="#2b5a92"/><ellipse cx="9.5" cy="9.5" rx="5" ry="2.6" fill="#2b5a92"/><circle cx="9.5" cy="9.5" r="1.2" fill="#fff"/></svg>
<svg style="left:1485px;top:175px" width="17" height="16" viewBox="0 0 17 16"><rect x="0.5" y="0.5" width="16" height="14" fill="#fff" stroke="#2b5a92"/><path d="M1 2.5 H16" stroke="#2b5a92"/><ellipse cx="8.5" cy="8.5" rx="5" ry="2.5" fill="none" stroke="#b0b0b0" stroke-width="1.4"/><path d="M5 5 L12 12" stroke="#2b5a92"/></svg>
<svg style="left:1509px;top:175px" width="17" height="16" viewBox="0 0 17 16"><rect x="0.5" y="0.5" width="16" height="15" fill="#fff" stroke="#2b5a92"/><path d="M1 2.5 H16" stroke="#2b5a92"/><ellipse cx="8.5" cy="6" rx="4.5" ry="2.2" fill="#2b5a92"/><ellipse cx="8.5" cy="11.5" rx="4.5" ry="2.2" fill="none" stroke="#b0b0b0" stroke-width="1.4"/><path d="M6 9 L11 14" stroke="#2b5a92"/></svg>
<svg style="left:1534px;top:176px" width="14" height="14" viewBox="0 0 14 14"><path d="M3.2 4 A5.5 5.5 0 1 1 2 8" fill="none" stroke="#2b5a92" stroke-width="1.4"/><path d="M1 1 V5.5 H5.5 Z" fill="#2b5a92"/></svg>
<div style="left:1561px;top:175px;width:1px;height:16px;background:#d0d4dc;"></div>
<svg style="left:971px;top:196px" width="16" height="13" viewBox="0 0 16 13"><rect x="0" y="3" width="16" height="10" fill="#3f7bbf"/><rect x="4" y="1" width="8" height="3" fill="#3f7bbf"/><circle cx="8" cy="8" r="3.5" fill="#3f7bbf" stroke="#fff" stroke-width="1.2"/><rect x="1" y="4" width="2" height="1.5" fill="#fff"/></svg>
<svg style="left:995px;top:195px" width="15" height="16" viewBox="0 0 15 16"><rect x="3" y="0.5" width="9" height="5" fill="#fff" stroke="#3f7bbf"/><rect x="0" y="4" width="15" height="8" rx="1.5" fill="#3f7bbf"/><rect x="2.5" y="10" width="10" height="5" fill="#fff" stroke="#3f7bbf"/><rect x="9" y="7" width="1.5" height="1.2" fill="#fff"/><rect x="11.2" y="7" width="1.5" height="1.2" fill="#fff"/></svg>
<div style="left:965px;top:216px;width:614px;height:621px;background:#fff;"></div>
<div style="left:1015px;top:239px;width:557px;height:558px;background:#c7c7c7;border-top:1px solid #8f8f8f;border-bottom:1px solid #8f8f8f;"></div>
<div style="left:1040px;top:264px;width:508px;height:508px;background:#f28b8b;border:1px solid #ff3a3a;"></div>
<div style="left:1014px;top:222px;width:559px;height:593px;border:1px solid #000;"></div>
<div style="left:1039px;top:216px;width:1px;height:6px;background:#000;"></div>
<div style="left:1039px;top:815px;width:1px;height:7px;background:#000;"></div>
<div class="t" style="left:1041px;top:821px;font-size:12.5px;line-height:12.5px;color:#000;letter-spacing:0.6px;">0</div>
<div style="left:1090px;top:216px;width:1px;height:6px;background:#000;"></div>
<div style="left:1090px;top:815px;width:1px;height:7px;background:#000;"></div>
<div class="t" style="left:1092px;top:821px;font-size:12.5px;line-height:12.5px;color:#000;letter-spacing:0.6px;">0.001</div>
<div style="left:1141px;top:216px;width:1px;height:6px;background:#000;"></div>
<div style="left:1141px;top:815px;width:1px;height:7px;background:#000;"></div>
<div class="t" style="left:1143px;top:821px;font-size:12.5px;line-height:12.5px;color:#000;letter-spacing:0.6px;">0.002</div>
<div style="left:1191px;top:216px;width:1px;height:6px;background:#000;"></div>
<div style="left:1191px;top:815px;width:1px;height:7px;background:#000;"></div>
<div class="t" style="left:1193px;top:821px;font-size:12.5px;line-height:12.5px;color:#000;letter-spacing:0.6px;">0.003</div>
<div style="left:1242px;top:216px;width:1px;height:6px;background:#000;"></div>
<div style="left:1242px;top:815px;width:1px;height:7px;background:#000;"></div>
<div class="t" style="left:1244px;top:821px;font-size:12.5px;line-height:12.5px;color:#000;letter-spacing:0.6px;">0.004</div>
<div style="left:1293px;top:216px;width:1px;height:6px;background:#000;"></div>
<div style="left:1293px;top:815px;width:1px;height:7px;background:#000;"></div>
<div class="t" style="left:1295px;top:821px;font-size:12.5px;line-height:12.5px;color:#000;letter-spacing:0.6px;">0.005</div>
<div style="left:1344px;top:216px;width:1px;height:6px;background:#000;"></div>
<div style="left:1344px;top:815px;width:1px;height:7px;background:#000;"></div>
<div class="t" style="left:1346px;top:821px;font-size:12.5px;line-height:12.5px;color:#000;letter-spacing:0.6px;">0.006</div>
<div style="left:1395px;top:216px;width:1px;height:6px;background:#000;"></div>
<div style="left:1395px;top:815px;width:1px;height:7px;background:#000;"></div>
<div class="t" style="left:1397px;top:821px;font-size:12.5px;line-height:12.5px;color:#000;letter-spacing:0.6px;">0.007</div>
<div style="left:1445px;top:216px;width:1px;height:6px;background:#000;"></div>
<div style="left:1445px;top:815px;width:1px;height:7px;background:#000;"></div>
<div class="t" style="left:1447px;top:821px;font-size:12.5px;line-height:12.5px;color:#000;letter-spacing:0.6px;">0.008</div>
<div style="left:1496px;top:216px;width:1px;height:6px;background:#000;"></div>
<div style="left:1496px;top:815px;width:1px;height:7px;background:#000;"></div>
<div class="t" style="left:1498px;top:821px;font-size:12.5px;line-height:12.5px;color:#000;letter-spacing:0.6px;">0.009</div>
<div style="left:1547px;top:216px;width:1px;height:6px;background:#000;"></div>
<div style="left:1547px;top:815px;width:1px;height:7px;background:#000;"></div>
<div class="t" style="left:1549px;top:821px;font-size:12.5px;line-height:12.5px;color:#000;letter-spacing:0.6px;">0.01</div>
<div style="left:1007px;top:772px;width:7px;height:1px;background:#000;"></div>
<div style="left:1573px;top:772px;width:7px;height:1px;background:#000;"></div>
<div class="t" style="left:947px;top:771px;width:60px;text-align:right;font-size:12.5px;line-height:12.5px;color:#000;letter-spacing:0.6px;">0</div>
<div style="left:1007px;top:722px;width:7px;height:1px;background:#000;"></div>
<div style="left:1573px;top:722px;width:7px;height:1px;background:#000;"></div>
<div class="t" style="left:947px;top:721px;width:60px;text-align:right;font-size:12.5px;line-height:12.5px;color:#000;letter-spacing:0.6px;">0.001</div>
<div style="left:1007px;top:671px;width:7px;height:1px;background:#000;"></div>
<div style="left:1573px;top:671px;width:7px;height:1px;background:#000;"></div>
<div class="t" style="left:947px;top:670px;width:60px;text-align:right;font-size:12.5px;line-height:12.5px;color:#000;letter-spacing:0.6px;">0.002</div>
<div style="left:1007px;top:620px;width:7px;height:1px;background:#000;"></div>
<div style="left:1573px;top:620px;width:7px;height:1px;background:#000;"></div>
<div class="t" style="left:947px;top:619px;width:60px;text-align:right;font-size:12.5px;line-height:12.5px;color:#000;letter-spacing:0.6px;">0.003</div>
<div style="left:1007px;top:569px;width:7px;height:1px;background:#000;"></div>
<div style="left:1573px;top:569px;width:7px;height:1px;background:#000;"></div>
<div class="t" style="left:947px;top:568px;width:60px;text-align:right;font-size:12.5px;line-height:12.5px;color:#000;letter-spacing:0.6px;">0.004</div>
<div style="left:1007px;top:518px;width:7px;height:1px;background:#000;"></div>
<div style="left:1573px;top:518px;width:7px;height:1px;background:#000;"></div>
<div class="t" style="left:947px;top:517px;width:60px;text-align:right;font-size:12.5px;line-height:12.5px;color:#000;letter-spacing:0.6px;">0.005</div>
<div style="left:1007px;top:468px;width:7px;height:1px;background:#000;"></div>
<div style="left:1573px;top:468px;width:7px;height:1px;background:#000;"></div>
<div class="t" style="left:947px;top:467px;width:60px;text-align:right;font-size:12.5px;line-height:12.5px;color:#000;letter-spacing:0.6px;">0.006</div>
<div style="left:1007px;top:417px;width:7px;height:1px;background:#000;"></div>
<div style="left:1573px;top:417px;width:7px;height:1px;background:#000;"></div>
<div class="t" style="left:947px;top:416px;width:60px;text-align:right;font-size:12.5px;line-height:12.5px;color:#000;letter-spacing:0.6px;">0.007</div>
<div style="left:1007px;top:366px;width:7px;height:1px;background:#000;"></div>
<div style="left:1573px;top:366px;width:7px;height:1px;background:#000;"></div>
<div class="t" style="left:947px;top:365px;width:60px;text-align:right;font-size:12.5px;line-height:12.5px;color:#000;letter-spacing:0.6px;">0.008</div>
<div style="left:1007px;top:315px;width:7px;height:1px;background:#000;"></div>
<div style="left:1573px;top:315px;width:7px;height:1px;background:#000;"></div>
<div class="t" style="left:947px;top:314px;width:60px;text-align:right;font-size:12.5px;line-height:12.5px;color:#000;letter-spacing:0.6px;">0.009</div>
<div style="left:1007px;top:264px;width:7px;height:1px;background:#000;"></div>
<div style="left:1573px;top:264px;width:7px;height:1px;background:#000;"></div>
<div class="t" style="left:947px;top:263px;width:60px;text-align:right;font-size:12.5px;line-height:12.5px;color:#000;letter-spacing:0.6px;">0.01</div>
<svg style="left:1009px;top:814px" width="11" height="6" viewBox="0 0 11 6"><path d="M5.5 0 L11 5 H0 Z" fill="#000"/></svg>
<svg style="left:1009px;top:416px" width="6" height="11" viewBox="0 0 6 11"><path d="M1 0 V10 L5 5 Z" fill="#000"/></svg>
<svg style="left:1546px;top:227px" width="22" height="13" viewBox="0 0 22 13"><path d="M1 12 Q4 4 12 2 L19 1 V12 Z" fill="#f4f4f4" stroke="#e4e4e4" stroke-width="0.8"/><rect x="5.5" y="4" width="14" height="9" rx="3.5" fill="#2146a8"/><rect x="7" y="6" width="7" height="6" fill="#f2e46a"/><rect x="14" y="5" width="4" height="7" rx="1.5" fill="#1a8ad8"/></svg>
<div class="t" style="left:1593px;top:150px;font-size:20px;line-height:20px;color:#3e6cb2;letter-spacing:-0.5px;">Add Physics</div>
<svg style="left:1873px;top:156px" width="9" height="5" viewBox="0 0 9 5"><path d="M0 0 H9 L4.5 5 Z" fill="#b9c2d0"/></svg>
<svg style="left:1888px;top:151px" width="8" height="12" viewBox="0 0 8 12"><rect x="1.5" y="0" width="5" height="6" fill="#b4bccb"/><rect x="0" y="6" width="8" height="1.5" fill="#b4bccb"/><rect x="3.3" y="7" width="1.4" height="5" fill="#b4bccb"/></svg>
<svg style="left:1902px;top:152px" width="10" height="10" viewBox="0 0 10 10"><path d="M1 1 L9 9 M9 1 L1 9" stroke="#b9c2d0" stroke-width="1.3"/></svg>
<svg style="left:1594px;top:176px" width="12" height="12" viewBox="0 0 12 12"><path d="M6 1 V11 M1 6 H11" stroke="#b0b0b0" stroke-width="2.6"/></svg>
<div class="t" style="left:1611px;top:176px;font-size:12.5px;line-height:12.5px;color:#7a7a7a;letter-spacing:0;">Add to Component</div>
<svg style="left:1726px;top:176px" width="12" height="12" viewBox="0 0 12 12"><path d="M6 1 V11 M1 6 H11" stroke="#b0b0b0" stroke-width="2.6"/></svg>
<div class="t" style="left:1743px;top:176px;font-size:12.5px;line-height:12.5px;color:#7a7a7a;letter-spacing:0;">Add to Selection</div>
<div style="left:1590px;top:203px;width:256px;height:17px;background:#fff;border:1px solid #d0d0d0;"></div>
<div style="left:1851px;top:205px;width:61px;height:17px;background:#dcdcdc;border:1px solid #707070;"></div>
<div class="t" style="left:1781.0px;top:208px;width:200px;text-align:center;font-size:12px;line-height:12px;color:#000;">Search</div>
<div style="left:1591px;top:225px;width:320px;height:299px;background:#fff;border:1px solid #d0d0d0;"></div>
<svg style="left:1610px;top:232px" width="7" height="10" viewBox="0 0 7 10"><path d="M1 1 L6 5 L1 9 Z" fill="#fff" stroke="#aaa" stroke-width="1"/></svg>
<svg style="left:1621px;top:228px" width="17" height="17" viewBox="0 0 17 17"><path d="M2.5 0.5 L10.5 2 L8 4.5 L13.5 8 L11 9 L15 15 L6.5 10 L9 9 L3 5 L6.5 4 Z" fill="#19a7c9"/></svg>
<div class="t" style="left:1642px;top:231px;font-size:12px;line-height:12px;color:#000;">AC/DC</div>
<svg style="left:1610px;top:249px" width="7" height="10" viewBox="0 0 7 10"><path d="M1 1 L6 5 L1 9 Z" fill="#fff" stroke="#aaa" stroke-width="1"/></svg>
<svg style="left:1621px;top:245px" width="17" height="17" viewBox="0 0 17 17"><path d="M4.5 6 Q6 8.5 4.5 11 M7.5 4 Q10 8.5 7.5 13 M10.5 2 Q14 8.5 10.5 15 M13.5 0.5 Q18 8.5 13.5 16.5" fill="none" stroke="#4d86c8" stroke-width="1.1"/></svg>
<div class="t" style="left:1642px;top:248px;font-size:12px;line-height:12px;color:#000;">Acoustics</div>
<svg style="left:1610px;top:266px" width="7" height="10" viewBox="0 0 7 10"><path d="M1 1 L6 5 L1 9 Z" fill="#fff" stroke="#aaa" stroke-width="1"/></svg>
<svg style="left:1621px;top:262px" width="17" height="17" viewBox="0 0 17 17"><circle cx="6" cy="2.5" r="2" fill="#3ea33e"/><circle cx="15" cy="3" r="2" fill="#3ea33e"/><circle cx="2.2" cy="6.5" r="2" fill="#3a78c0"/><circle cx="10" cy="7" r="2" fill="#3a78c0"/><circle cx="15" cy="8" r="2" fill="#f58a1a"/><circle cx="2.5" cy="13" r="2" fill="#3ea33e"/><circle cx="8.5" cy="12" r="2" fill="#f58a1a"/><circle cx="13" cy="13" r="2" fill="#3a78c0"/></svg>
<div class="t" style="left:1642px;top:265px;font-size:12px;line-height:12px;color:#000;">Chemical Species Transport</div>
<svg style="left:1610px;top:283px" width="7" height="10" viewBox="0 0 7 10"><path d="M1 1 L6 5 L1 9 Z" fill="#fff" stroke="#aaa" stroke-width="1"/></svg>
<svg style="left:1621px;top:279px" width="17" height="17" viewBox="0 0 17 17"><path d="M1 3.5 C5 2.5 8 4 10 5.5 C12 7 14 7.5 17 7 M1 7 C5 6 8 7.5 10 9 C12 10.5 14 11 17 10.5 M1 10.5 C5 9.5 8 11 10 12.5 C12 14 14 14.5 17 14" fill="none" stroke="#4d86c8" stroke-width="1"/></svg>
<div class="t" style="left:1642px;top:282px;font-size:12px;line-height:12px;color:#000;">Fluid Flow</div>
<svg style="left:1610px;top:300px" width="7" height="10" viewBox="0 0 7 10"><path d="M1 1 L6 5 L1 9 Z" fill="#fff" stroke="#aaa" stroke-width="1"/></svg>
<svg style="left:1621px;top:296px" width="17" height="17" viewBox="0 0 17 17"><path d="M5 0.5 C3 3 3.5 6 4.5 8 C5.5 10 5 13 3 16 M9.5 0 C7.5 3 8 6 9 8 C10 10 9.5 13 7.5 16 M14 0.5 C12 3 12.5 6 13.5 8 C14.5 10 14 13 12 16" fill="none" stroke="#f7931e" stroke-width="1.3"/></svg>
<div class="t" style="left:1642px;top:299px;font-size:12px;line-height:12px;color:#000;">Heat Transfer</div>
<svg style="left:1610px;top:317px" width="7" height="10" viewBox="0 0 7 10"><path d="M1 1 L6 5 L1 9 Z" fill="#fff" stroke="#aaa" stroke-width="1"/></svg>
<svg style="left:1621px;top:313px" width="17" height="17" viewBox="0 0 17 17"><rect x="5" y="1" width="7" height="3.5" fill="#fff" stroke="#3a78c0"/><rect x="1" y="4.5" width="15" height="6" fill="#dfe6ef" stroke="#3a78c0"/><rect x="1.5" y="6.5" width="14" height="2" fill="#b8c8dc"/><rect x="5" y="10.5" width="7" height="3.5" fill="#fff" stroke="#3a78c0"/><rect x="7" y="14" width="3" height="2.5" fill="#fff" stroke="#3a78c0"/></svg>
<div class="t" style="left:1642px;top:316px;font-size:12px;line-height:12px;color:#000;">Structural Mechanics</div>
<svg style="left:1610px;top:334px" width="7" height="10" viewBox="0 0 7 10"><path d="M1 1 L6 5 L1 9 Z" fill="#fff" stroke="#aaa" stroke-width="1"/></svg>
<svg style="left:1621px;top:330px" width="17" height="17" viewBox="0 0 17 17"><path d="M1 14.5 L5.8 4 L10.6 14.5 Z" fill="none" stroke="#3a78c0" stroke-width="1.2"/><path d="M11.5 8 V13 A2.2 2.2 0 0 0 15.9 13 V8" fill="none" stroke="#3a78c0" stroke-width="1.2"/></svg>
<div class="t" style="left:1642px;top:333px;font-size:12px;line-height:12px;color:#000;">Mathematics</div>
<div style="left:1592px;top:536px;width:10px;height:1px;background:#d6d6d6;"></div>
<div class="t" style="left:1605px;top:530px;font-size:12px;line-height:12px;color:#000;">Physics interfaces in study</div>
<div style="left:1747px;top:536px;width:163px;height:1px;background:#d6d6d6;"></div>
<div style="left:1591px;top:546px;width:320px;height:84px;background:#fff;border:1px solid #a8a8a8;"></div>
<div style="left:1592px;top:553px;width:280px;height:19px;background:linear-gradient(#f8f8f8,#eeeeee);border-bottom:1px solid #d8d8d8;"></div>
<div style="left:1872px;top:547px;width:1px;height:82px;background:#d8d8d8;"></div>
<div class="t" style="left:1592px;top:556px;font-size:12px;line-height:12px;color:#000;">Studies</div>
<div class="t" style="left:1877px;top:556px;font-size:12px;line-height:12px;color:#000;">Solve</div>
<div style="left:1592px;top:573px;width:279px;height:18px;background:#efefef;border-bottom:1px solid #c8c8c8;"></div>
<div style="left:1872px;top:591px;width:38px;height:1px;background:#d8d8d8;"></div>
<div class="t" style="left:1595px;top:576px;font-size:12px;line-height:12px;color:#000;">Study 1</div>
<svg style="left:1883px;top:573px" width="16" height="15" viewBox="0 0 16 15"><rect x="0.5" y="2.5" width="12" height="12" fill="#fff" stroke="#555"/><path d="M2.5 7.5 L6 11 L14 2" fill="none" stroke="#3aa03a" stroke-width="2.3"/></svg>
<div style="left:1592px;top:592px;width:279px;height:18px;background:#efefef;border-bottom:1px solid #c8c8c8;"></div>
<div style="left:1872px;top:610px;width:38px;height:1px;background:#d8d8d8;"></div>
<div class="t" style="left:1595px;top:595px;font-size:12px;line-height:12px;color:#000;">Study 2</div>
<svg style="left:1883px;top:592px" width="16" height="15" viewBox="0 0 16 15"><rect x="0.5" y="2.5" width="12" height="12" fill="#fff" stroke="#555"/><path d="M2.5 7.5 L6 11 L14 2" fill="none" stroke="#3aa03a" stroke-width="2.3"/></svg>
<div style="left:1592px;top:611px;width:279px;height:18px;background:#efefef;border-bottom:1px solid #c8c8c8;"></div>
<div style="left:1872px;top:629px;width:38px;height:1px;background:#d8d8d8;"></div>
<div class="t" style="left:1595px;top:614px;font-size:12px;line-height:12px;color:#000;">Study 3</div>
<svg style="left:1883px;top:611px" width="16" height="15" viewBox="0 0 16 15"><rect x="0.5" y="2.5" width="12" height="12" fill="#fff" stroke="#555"/><path d="M2.5 7.5 L6 11 L14 2" fill="none" stroke="#3aa03a" stroke-width="2.3"/></svg>
<div style="left:1586px;top:645px;width:329px;height:25px;background:#dde7f3;"></div>
<svg style="left:1593px;top:651px" width="7" height="12" viewBox="0 0 7 12"><path d="M1 1 L6 6 L1 11 Z" fill="none" stroke="#a0a0a0"/></svg>
<div class="t" style="left:1615px;top:650px;font-size:13px;line-height:13px;color:#000;letter-spacing:0;">Dependent Variables</div>
<div style="left:965px;top:872px;width:950px;height:1px;background:#d0d0d0;"></div>
<div style="left:969px;top:849px;width:69px;height:24px;background:#f9fafd;border:1px solid #d0d0d0;border-bottom:none;"></div>
<div class="t" style="left:973px;top:855px;font-size:13px;line-height:13px;color:#2b5aa3;">Messages</div>
<div style="left:1046px;top:850px;width:60px;height:22px;background:#ebebeb;"></div>
<div class="t" style="left:1050px;top:855px;font-size:13px;line-height:13px;color:#000;">Progress</div>
<div style="left:1114px;top:850px;width:30px;height:22px;background:#ebebeb;"></div>
<div class="t" style="left:1118px;top:855px;font-size:13px;line-height:13px;color:#000;">Log</div>
<div style="left:1152px;top:850px;width:40px;height:22px;background:#ebebeb;"></div>
<div class="t" style="left:1156px;top:855px;font-size:13px;line-height:13px;color:#000;">Table</div>
<svg style="left:1874px;top:859px" width="9" height="5" viewBox="0 0 9 5"><path d="M0 0 H9 L4.5 5 Z" fill="#b9c2d0"/></svg>
<svg style="left:1888px;top:855px" width="8" height="12" viewBox="0 0 8 12"><rect x="1.5" y="0" width="5" height="6" fill="#b4bccb"/><rect x="0" y="6" width="8" height="1.5" fill="#b4bccb"/><rect x="3.3" y="7" width="1.4" height="5" fill="#b4bccb"/></svg>
<svg style="left:1902px;top:856px" width="10" height="10" viewBox="0 0 10 10"><path d="M1 1 L9 9 M9 1 L1 9" stroke="#b9c2d0" stroke-width="1.3"/></svg>
<svg style="left:974px;top:880px" width="12" height="16" viewBox="0 0 12 16"><path d="M1 1 L5 8" stroke="#555" stroke-width="1.6"/><path d="M4 7 L11 13 L7 16 L3 9 Z" fill="#e8cca8" stroke="#c9a070" stroke-width="0.6"/><path d="M4 8 L6.5 7" stroke="#e0503a" stroke-width="1.4"/></svg>
<div style="left:969px;top:901px;width:1px;height:112px;background:#d0d0d0;"></div>
<div style="left:970px;top:901px;width:923px;height:112px;overflow:hidden;">
<div class="t" style="left:2px;top:-6px;font-size:12px;line-height:12px;color:#000;letter-spacing:-0.1px;">Opened file: phase_change_try2D_natConv_2.mph</div>
<div class="t" style="left:2px;top:9px;font-size:12px;line-height:12px;color:#000;letter-spacing:-0.1px;">Complete mesh consists of 1222 domain elements and 164 boundary elements.</div>
<div class="t" style="left:2px;top:24px;font-size:12px;line-height:12px;color:#000;letter-spacing:-0.1px;">Number of degrees of freedom solved for: 5840 (plus 262 internal DOFs).</div>
<div class="t" style="left:2px;top:39px;font-size:12px;line-height:12px;color:#000;letter-spacing:-0.1px;">Complete mesh consists of 1690 domain elements and 204 boundary elements.</div>
<div class="t" style="left:2px;top:54px;font-size:12px;line-height:12px;color:#000;letter-spacing:-0.1px;">Number of degrees of freedom solved for: 7999 (plus 322 internal DOFs).</div>
<div class="t" style="left:2px;top:69px;font-size:12px;line-height:12px;color:#000;letter-spacing:-0.1px;">Solution time (Solution 1): 161 s. (2 minutes, 41 seconds)</div>
<div class="t" style="left:2px;top:84px;font-size:12px;line-height:12px;color:#000;letter-spacing:-0.1px;">Number of degrees of freedom solved for: 7999 (plus 322 internal DOFs).</div>
<div class="t" style="left:2px;top:99px;font-size:12px;line-height:12px;color:#000;letter-spacing:-0.1px;">Number of degrees of freedom solved for: 7999 (plus 322 internal DOFs).</div>
</div>
<div style="left:1893px;top:901px;width:1px;height:112px;background:#d0d0d0;"></div>
<div style="left:1898px;top:901px;width:17px;height:112px;background:#f0f0f0;"></div>
<div style="left:1898px;top:930px;width:17px;height:57px;background:#cdcdcd;"></div>
<svg style="left:1902px;top:908px" width="10" height="6" viewBox="0 0 10 6"><path d="M1 5.5 L5 1.5 L9 5.5" stroke="#8a8a8a" stroke-width="1.3" fill="none"/></svg>
<svg style="left:1902px;top:1002px" width="10" height="6" viewBox="0 0 10 6"><path d="M1 0.5 L5 4.5 L9 0.5" stroke="#8a8a8a" stroke-width="1.3" fill="none"/></svg>
</body></html>
